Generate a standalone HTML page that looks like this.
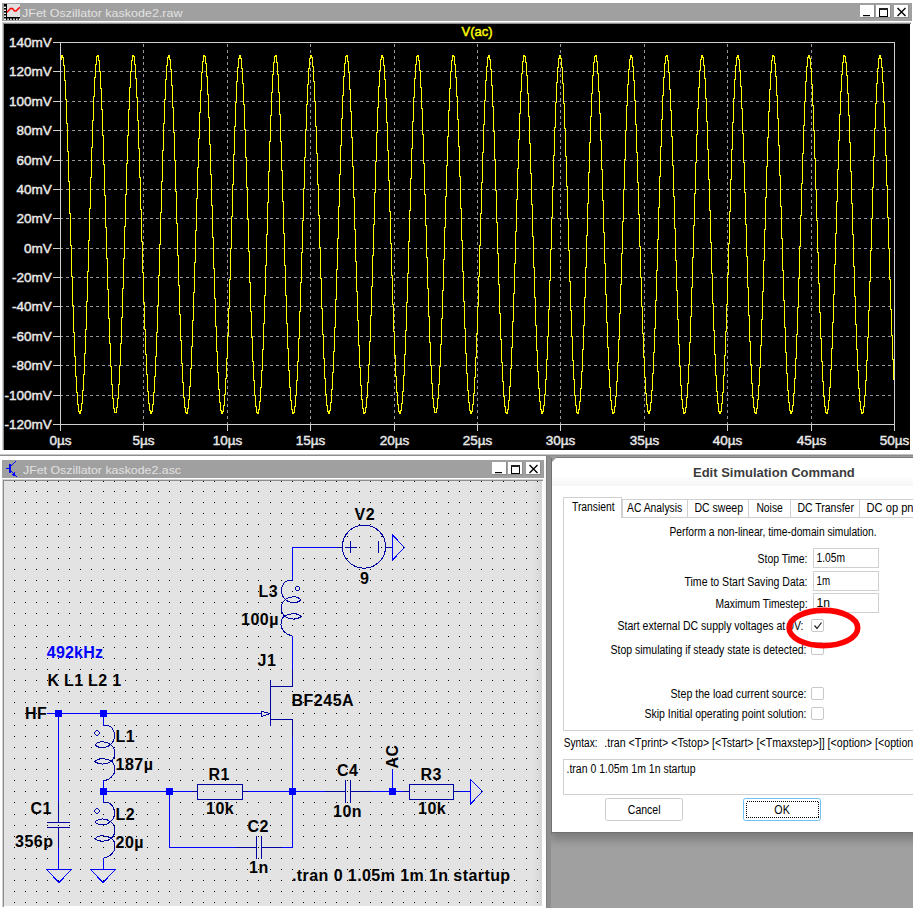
<!DOCTYPE html>
<html><head><meta charset="utf-8"><title>LTspice</title>
<style>
html,body{margin:0;padding:0;background:#fff;width:913px;height:908px;overflow:hidden}
svg{display:block;position:absolute;left:0;top:0}
text{font-family:"Liberation Sans", sans-serif}
</style></head><body>
<svg width="913" height="908" viewBox="0 0 913 908">

<rect x="2" y="3" width="910" height="18" fill="#a0a0a0" />
<rect x="7" y="4" width="13" height="13" fill="#e0e0e0" />
<rect x="4" y="4" width="3" height="16" fill="#000" />
<rect x="4" y="17" width="16" height="3" fill="#000" />
<rect x="4" y="6.6" width="2" height="1.4" fill="#fff" />
<rect x="4" y="9.6" width="2" height="1.4" fill="#fff" />
<rect x="4" y="12.6" width="2" height="1.4" fill="#fff" />
<rect x="4" y="15.5" width="2" height="1.4" fill="#fff" />
<rect x="4" y="18.5" width="2" height="1.4" fill="#fff" />
<rect x="7.3" y="18.5" width="1.5" height="1.5" fill="#fff" />
<rect x="10.2" y="18.5" width="1.5" height="1.5" fill="#fff" />
<rect x="13.2" y="18.5" width="1.5" height="1.5" fill="#fff" />
<rect x="16.1" y="18.5" width="1.5" height="1.5" fill="#fff" />
<rect x="18.8" y="18.5" width="1.5" height="1.5" fill="#fff" />
<polyline points="7,12.3 10.5,8.5 12.5,8.5 14.5,11 16,11 19.8,7.2" fill="none" stroke="#f00" stroke-width="1.5"/>
<text x="22" y="17.3" font-size="11.5" font-weight="normal" fill="#e2e2e2" text-anchor="start" textLength="160.5" lengthAdjust="spacingAndGlyphs" >JFet Oszillator kaskode2.raw</text>
<rect x="860" y="5" width="15" height="13" fill="#ffffff" />
<rect x="860" y="17" width="15" height="1" fill="#8c8c8c" />
<rect x="874" y="5" width="1" height="13" fill="#8c8c8c" />
<rect x="876" y="5" width="15" height="13" fill="#ffffff" />
<rect x="876" y="17" width="15" height="1" fill="#8c8c8c" />
<rect x="890" y="5" width="1" height="13" fill="#8c8c8c" />
<rect x="894" y="5" width="15" height="13" fill="#ffffff" />
<rect x="894" y="17" width="15" height="1" fill="#8c8c8c" />
<rect x="908" y="5" width="1" height="13" fill="#8c8c8c" />
<rect x="863" y="15" width="7" height="1.2" fill="#000" />
<rect x="879.5" y="8.5" width="8" height="8" fill="none" stroke="#000" stroke-width="1" shape-rendering="crispEdges"/>
<rect x="879" y="8" width="9" height="2" fill="#222" />
<path d="M897.5 8L905.5 16M905.5 8L897.5 16" stroke="#000" stroke-width="1.4"/>
<rect x="2" y="22" width="909" height="1" fill="#d2d2d2" />
<rect x="2" y="22" width="1" height="428" fill="#d2d2d2" />
<rect x="3" y="23" width="908" height="1" fill="#8c8c8c" />
<rect x="3" y="23" width="1" height="427" fill="#8c8c8c" />
<rect x="4" y="24" width="906" height="426" fill="#000" />
<path d="M60 71.5H894M60 101.5H894M60 130.5H894M60 160.5H894M60 189.5H894M60 218.5H894M60 248.5H894M60 277.5H894M60 306.5H894M60 336.5H894M60 365.5H894M60 395.5H894M143.5 44V424M227.5 44V424M310.5 44V424M394.5 44V424M477.5 44V424M560.5 44V424M644.5 44V424M727.5 44V424M811.5 44V424" stroke="#969696" stroke-width="1" stroke-dasharray="3 3" fill="none"/>
<rect x="60.5" y="42.5" width="834" height="382" fill="none" stroke="#d0d0d0" stroke-width="1"/>
<path d="M53 42.5H60M53 71.5H60M53 101.5H60M53 130.5H60M53 160.5H60M53 189.5H60M53 218.5H60M53 248.5H60M53 277.5H60M53 306.5H60M53 336.5H60M53 365.5H60M53 395.5H60M53 424.5H60M60.5 424V431M143.5 424V431M227.5 424V431M310.5 424V431M394.5 424V431M477.5 424V431M560.5 424V431M644.5 424V431M727.5 424V431M811.5 424V431M894.5 424V431" stroke="#d0d0d0" stroke-width="1" fill="none"/>
<text x="51.8" y="47" font-size="13.5" font-weight="normal" fill="#e8e8e8" text-anchor="end" stroke="#e8e8e8" stroke-width="0.45">140mV</text>
<text x="51.8" y="76" font-size="13.5" font-weight="normal" fill="#e8e8e8" text-anchor="end" stroke="#e8e8e8" stroke-width="0.45">120mV</text>
<text x="51.8" y="106" font-size="13.5" font-weight="normal" fill="#e8e8e8" text-anchor="end" stroke="#e8e8e8" stroke-width="0.45">100mV</text>
<text x="51.8" y="135" font-size="13.5" font-weight="normal" fill="#e8e8e8" text-anchor="end" stroke="#e8e8e8" stroke-width="0.45">80mV</text>
<text x="51.8" y="165" font-size="13.5" font-weight="normal" fill="#e8e8e8" text-anchor="end" stroke="#e8e8e8" stroke-width="0.45">60mV</text>
<text x="51.8" y="194" font-size="13.5" font-weight="normal" fill="#e8e8e8" text-anchor="end" stroke="#e8e8e8" stroke-width="0.45">40mV</text>
<text x="51.8" y="223" font-size="13.5" font-weight="normal" fill="#e8e8e8" text-anchor="end" stroke="#e8e8e8" stroke-width="0.45">20mV</text>
<text x="51.8" y="253" font-size="13.5" font-weight="normal" fill="#e8e8e8" text-anchor="end" stroke="#e8e8e8" stroke-width="0.45">0mV</text>
<text x="51.8" y="282" font-size="13.5" font-weight="normal" fill="#e8e8e8" text-anchor="end" stroke="#e8e8e8" stroke-width="0.45">-20mV</text>
<text x="51.8" y="311" font-size="13.5" font-weight="normal" fill="#e8e8e8" text-anchor="end" stroke="#e8e8e8" stroke-width="0.45">-40mV</text>
<text x="51.8" y="341" font-size="13.5" font-weight="normal" fill="#e8e8e8" text-anchor="end" stroke="#e8e8e8" stroke-width="0.45">-60mV</text>
<text x="51.8" y="370" font-size="13.5" font-weight="normal" fill="#e8e8e8" text-anchor="end" stroke="#e8e8e8" stroke-width="0.45">-80mV</text>
<text x="51.8" y="400" font-size="13.5" font-weight="normal" fill="#e8e8e8" text-anchor="end" stroke="#e8e8e8" stroke-width="0.45">-100mV</text>
<text x="51.8" y="429" font-size="13.5" font-weight="normal" fill="#e8e8e8" text-anchor="end" stroke="#e8e8e8" stroke-width="0.45">-120mV</text>
<text x="60.5" y="445" font-size="13.5" font-weight="normal" fill="#e8e8e8" text-anchor="middle" stroke="#e8e8e8" stroke-width="0.45">0µs</text>
<text x="143.5" y="445" font-size="13.5" font-weight="normal" fill="#e8e8e8" text-anchor="middle" stroke="#e8e8e8" stroke-width="0.45">5µs</text>
<text x="227.5" y="445" font-size="13.5" font-weight="normal" fill="#e8e8e8" text-anchor="middle" stroke="#e8e8e8" stroke-width="0.45">10µs</text>
<text x="310.5" y="445" font-size="13.5" font-weight="normal" fill="#e8e8e8" text-anchor="middle" stroke="#e8e8e8" stroke-width="0.45">15µs</text>
<text x="394.5" y="445" font-size="13.5" font-weight="normal" fill="#e8e8e8" text-anchor="middle" stroke="#e8e8e8" stroke-width="0.45">20µs</text>
<text x="477.5" y="445" font-size="13.5" font-weight="normal" fill="#e8e8e8" text-anchor="middle" stroke="#e8e8e8" stroke-width="0.45">25µs</text>
<text x="560.5" y="445" font-size="13.5" font-weight="normal" fill="#e8e8e8" text-anchor="middle" stroke="#e8e8e8" stroke-width="0.45">30µs</text>
<text x="644.5" y="445" font-size="13.5" font-weight="normal" fill="#e8e8e8" text-anchor="middle" stroke="#e8e8e8" stroke-width="0.45">35µs</text>
<text x="727.5" y="445" font-size="13.5" font-weight="normal" fill="#e8e8e8" text-anchor="middle" stroke="#e8e8e8" stroke-width="0.45">40µs</text>
<text x="811.5" y="445" font-size="13.5" font-weight="normal" fill="#e8e8e8" text-anchor="middle" stroke="#e8e8e8" stroke-width="0.45">45µs</text>
<text x="894.5" y="445" font-size="13.5" font-weight="normal" fill="#e8e8e8" text-anchor="middle" stroke="#e8e8e8" stroke-width="0.45">50µs</text>
<text x="477" y="36.2" font-size="13.5" font-weight="normal" fill="#ffff00" text-anchor="middle" textLength="31" lengthAdjust="spacingAndGlyphs" stroke="#ffff00" stroke-width="0.45">V(ac)</text>
<path d="M61 55h1v5h-1zM62 55h1v3h-1zM63 57h1v9h-1zM64 65h1v16h-1zM65 80h1v20h-1zM66 99h1v25h-1zM67 123h1v29h-1zM68 151h1v31h-1zM69 181h1v33h-1zM70 213h1v33h-1zM71 245h1v32h-1zM72 276h1v30h-1zM73 305h1v28h-1zM74 332h1v25h-1zM75 356h1v21h-1zM76 376h1v17h-1zM77 392h1v13h-1zM78 404h1v8h-1zM79 411h1v3h-1zM80 410h1v4h-1zM81 403h1v8h-1zM82 390h1v14h-1zM83 374h1v17h-1zM84 353h1v22h-1zM85 329h1v25h-1zM86 301h1v29h-1zM87 271h1v31h-1zM88 240h1v32h-1zM89 208h1v33h-1zM90 177h1v32h-1zM91 147h1v31h-1zM92 120h1v28h-1zM93 96h1v25h-1zM94 77h1v20h-1zM95 64h1v14h-1zM96 56h1v9h-1zM97 55h1v2h-1zM98 55h1v6h-1zM99 60h1v12h-1zM100 71h1v18h-1zM101 88h1v22h-1zM102 109h1v27h-1zM103 135h1v30h-1zM104 164h1v32h-1zM105 195h1v33h-1zM106 227h1v32h-1zM107 258h1v32h-1zM108 289h1v30h-1zM109 318h1v26h-1zM110 343h1v24h-1zM111 366h1v19h-1zM112 384h1v15h-1zM113 398h1v11h-1zM114 408h1v5h-1zM115 412h1v1h-1zM116 407h1v6h-1zM117 398h1v10h-1zM118 384h1v15h-1zM119 365h1v20h-1zM120 343h1v23h-1zM121 317h1v27h-1zM122 288h1v30h-1zM123 258h1v31h-1zM124 226h1v33h-1zM125 194h1v33h-1zM126 163h1v32h-1zM127 135h1v29h-1zM128 109h1v27h-1zM129 87h1v23h-1zM130 71h1v17h-1zM131 60h1v12h-1zM132 55h1v6h-1zM133 55h1v2h-1zM134 56h1v9h-1zM135 64h1v15h-1zM136 78h1v20h-1zM137 97h1v24h-1zM138 120h1v29h-1zM139 148h1v30h-1zM140 177h1v33h-1zM141 209h1v33h-1zM142 241h1v32h-1zM143 272h1v31h-1zM144 302h1v28h-1zM145 329h1v26h-1zM146 354h1v21h-1zM147 374h1v18h-1zM148 391h1v13h-1zM149 403h1v8h-1zM150 410h1v4h-1zM151 411h1v3h-1zM152 404h1v8h-1zM153 392h1v13h-1zM154 376h1v17h-1zM155 356h1v21h-1zM156 332h1v25h-1zM157 305h1v28h-1zM158 275h1v31h-1zM159 244h1v32h-1zM160 212h1v33h-1zM161 181h1v32h-1zM162 150h1v32h-1zM163 123h1v28h-1zM164 99h1v25h-1zM165 79h1v21h-1zM166 65h1v15h-1zM167 57h1v9h-1zM168 55h1v3h-1zM169 55h1v5h-1zM170 59h1v11h-1zM171 69h1v17h-1zM172 85h1v23h-1zM173 107h1v26h-1zM174 132h1v29h-1zM175 160h1v32h-1zM176 191h1v33h-1zM177 223h1v33h-1zM178 255h1v31h-1zM179 285h1v30h-1zM180 314h1v27h-1zM181 340h1v24h-1zM182 363h1v20h-1zM183 382h1v16h-1zM184 397h1v11h-1zM185 407h1v6h-1zM186 412h1v2h-1zM187 408h1v6h-1zM188 399h1v10h-1zM189 386h1v14h-1zM190 368h1v19h-1zM191 346h1v23h-1zM192 320h1v27h-1zM193 292h1v29h-1zM194 262h1v31h-1zM195 230h1v33h-1zM196 198h1v33h-1zM197 167h1v32h-1zM198 138h1v30h-1zM199 112h1v27h-1zM200 90h1v23h-1zM201 72h1v19h-1zM202 61h1v12h-1zM203 55h1v7h-1zM204 55h1v2h-1zM205 56h1v8h-1zM206 63h1v14h-1zM207 76h1v19h-1zM208 94h1v24h-1zM209 117h1v28h-1zM210 144h1v31h-1zM211 174h1v32h-1zM212 205h1v33h-1zM213 237h1v32h-1zM214 268h1v31h-1zM215 298h1v29h-1zM216 326h1v26h-1zM217 351h1v22h-1zM218 372h1v18h-1zM219 389h1v14h-1zM220 402h1v9h-1zM221 410h1v4h-1zM222 411h1v3h-1zM223 405h1v7h-1zM224 394h1v12h-1zM225 378h1v17h-1zM226 358h1v21h-1zM227 335h1v24h-1zM228 308h1v28h-1zM229 279h1v30h-1zM230 248h1v32h-1zM231 216h1v33h-1zM232 184h1v33h-1zM233 154h1v31h-1zM234 126h1v29h-1zM235 102h1v25h-1zM236 81h1v22h-1zM237 67h1v15h-1zM238 58h1v10h-1zM239 55h1v4h-1zM240 55h1v4h-1zM241 58h1v11h-1zM242 68h1v16h-1zM243 83h1v22h-1zM244 104h1v26h-1zM245 129h1v29h-1zM246 157h1v31h-1zM247 187h1v33h-1zM248 219h1v33h-1zM249 251h1v32h-1zM250 282h1v30h-1zM251 311h1v27h-1zM252 337h1v25h-1zM253 361h1v20h-1zM254 380h1v16h-1zM255 395h1v12h-1zM256 406h1v7h-1zM257 412h1v2h-1zM258 409h1v5h-1zM259 401h1v9h-1zM260 387h1v15h-1zM261 370h1v18h-1zM262 349h1v22h-1zM263 323h1v27h-1zM264 295h1v29h-1zM265 265h1v31h-1zM266 234h1v32h-1zM267 202h1v33h-1zM268 171h1v32h-1zM269 141h1v31h-1zM270 115h1v27h-1zM271 92h1v24h-1zM272 74h1v19h-1zM273 62h1v13h-1zM274 56h1v7h-1zM275 55h1v2h-1zM276 55h1v8h-1zM277 62h1v13h-1zM278 74h1v19h-1zM279 92h1v23h-1zM280 114h1v28h-1zM281 141h1v30h-1zM282 170h1v32h-1zM283 201h1v33h-1zM284 233h1v33h-1zM285 265h1v31h-1zM286 295h1v29h-1zM287 323h1v26h-1zM288 348h1v23h-1zM289 370h1v18h-1zM290 387h1v14h-1zM291 400h1v10h-1zM292 409h1v5h-1zM293 412h1v2h-1zM294 406h1v7h-1zM295 395h1v12h-1zM296 380h1v16h-1zM297 361h1v20h-1zM298 338h1v24h-1zM299 311h1v28h-1zM300 282h1v30h-1zM301 252h1v31h-1zM302 220h1v33h-1zM303 188h1v33h-1zM304 157h1v32h-1zM305 129h1v29h-1zM306 104h1v26h-1zM307 84h1v21h-1zM308 68h1v17h-1zM309 58h1v11h-1zM310 55h1v4h-1zM311 55h1v3h-1zM312 57h1v10h-1zM313 66h1v16h-1zM314 81h1v21h-1zM315 101h1v26h-1zM316 126h1v28h-1zM317 153h1v32h-1zM318 184h1v32h-1zM319 215h1v33h-1zM320 247h1v32h-1zM321 278h1v31h-1zM322 308h1v27h-1zM323 334h1v25h-1zM324 358h1v21h-1zM325 378h1v17h-1zM326 394h1v12h-1zM327 405h1v7h-1zM328 411h1v3h-1zM329 410h1v4h-1zM330 402h1v9h-1zM331 389h1v14h-1zM332 372h1v18h-1zM333 351h1v22h-1zM334 327h1v25h-1zM335 299h1v29h-1zM336 269h1v31h-1zM337 238h1v32h-1zM338 206h1v33h-1zM339 174h1v33h-1zM340 145h1v30h-1zM341 118h1v28h-1zM342 95h1v24h-1zM343 76h1v20h-1zM344 63h1v14h-1zM345 56h1v8h-1zM346 55h1v2h-1zM347 55h1v7h-1zM348 61h1v12h-1zM349 72h1v18h-1zM350 89h1v23h-1zM351 111h1v27h-1zM352 137h1v30h-1zM353 166h1v32h-1zM354 197h1v33h-1zM355 229h1v33h-1zM356 261h1v31h-1zM357 291h1v30h-1zM358 320h1v26h-1zM359 345h1v23h-1zM360 367h1v19h-1zM361 385h1v15h-1zM362 399h1v10h-1zM363 408h1v6h-1zM364 412h1v2h-1zM365 407h1v6h-1zM366 397h1v11h-1zM367 382h1v16h-1zM368 364h1v19h-1zM369 341h1v24h-1zM370 315h1v27h-1zM371 286h1v30h-1zM372 255h1v32h-1zM373 224h1v32h-1zM374 192h1v33h-1zM375 161h1v32h-1zM376 132h1v30h-1zM377 107h1v26h-1zM378 86h1v22h-1zM379 70h1v17h-1zM380 59h1v12h-1zM381 55h1v5h-1zM382 55h1v3h-1zM383 57h1v9h-1zM384 65h1v15h-1zM385 79h1v20h-1zM386 98h1v25h-1zM387 122h1v29h-1zM388 150h1v31h-1zM389 180h1v32h-1zM390 211h1v33h-1zM391 243h1v33h-1zM392 275h1v30h-1zM393 304h1v28h-1zM394 331h1v25h-1zM395 355h1v22h-1zM396 376h1v17h-1zM397 392h1v13h-1zM398 404h1v8h-1zM399 411h1v3h-1zM400 410h1v4h-1zM401 403h1v8h-1zM402 391h1v13h-1zM403 375h1v17h-1zM404 354h1v22h-1zM405 330h1v25h-1zM406 302h1v29h-1zM407 273h1v30h-1zM408 241h1v33h-1zM409 210h1v32h-1zM410 178h1v33h-1zM411 148h1v31h-1zM412 121h1v28h-1zM413 97h1v25h-1zM414 78h1v20h-1zM415 64h1v15h-1zM416 56h1v9h-1zM417 55h1v2h-1zM418 55h1v6h-1zM419 60h1v11h-1zM420 70h1v18h-1zM421 87h1v22h-1zM422 108h1v27h-1zM423 134h1v30h-1zM424 163h1v32h-1zM425 194h1v32h-1zM426 225h1v33h-1zM427 257h1v32h-1zM428 288h1v29h-1zM429 316h1v27h-1zM430 342h1v24h-1zM431 365h1v19h-1zM432 383h1v16h-1zM433 398h1v10h-1zM434 407h1v6h-1zM435 412h1v1h-1zM436 408h1v5h-1zM437 398h1v11h-1zM438 384h1v15h-1zM439 366h1v19h-1zM440 344h1v23h-1zM441 318h1v27h-1zM442 290h1v29h-1zM443 259h1v32h-1zM444 227h1v33h-1zM445 196h1v32h-1zM446 165h1v32h-1zM447 136h1v30h-1zM448 110h1v27h-1zM449 88h1v23h-1zM450 71h1v18h-1zM451 60h1v12h-1zM452 55h1v6h-1zM453 55h1v2h-1zM454 56h1v9h-1zM455 64h1v14h-1zM456 77h1v20h-1zM457 96h1v24h-1zM458 119h1v28h-1zM459 146h1v31h-1zM460 176h1v33h-1zM461 208h1v33h-1zM462 240h1v32h-1zM463 271h1v31h-1zM464 301h1v28h-1zM465 328h1v26h-1zM466 353h1v21h-1zM467 373h1v18h-1zM468 390h1v13h-1zM469 402h1v9h-1zM470 410h1v4h-1zM471 411h1v3h-1zM472 404h1v8h-1zM473 393h1v12h-1zM474 377h1v17h-1zM475 357h1v21h-1zM476 333h1v25h-1zM477 306h1v28h-1zM478 276h1v31h-1zM479 245h1v32h-1zM480 213h1v33h-1zM481 182h1v32h-1zM482 152h1v31h-1zM483 124h1v29h-1zM484 100h1v25h-1zM485 80h1v21h-1zM486 66h1v15h-1zM487 57h1v10h-1zM488 55h1v3h-1zM489 55h1v5h-1zM490 59h1v11h-1zM491 69h1v17h-1zM492 85h1v22h-1zM493 106h1v26h-1zM494 131h1v29h-1zM495 159h1v32h-1zM496 190h1v33h-1zM497 222h1v32h-1zM498 253h1v32h-1zM499 284h1v30h-1zM500 313h1v27h-1zM501 339h1v24h-1zM502 362h1v20h-1zM503 381h1v16h-1zM504 396h1v11h-1zM505 406h1v7h-1zM506 412h1v2h-1zM507 409h1v5h-1zM508 400h1v10h-1zM509 386h1v15h-1zM510 368h1v19h-1zM511 347h1v22h-1zM512 321h1v27h-1zM513 293h1v29h-1zM514 263h1v31h-1zM515 231h1v33h-1zM516 199h1v33h-1zM517 168h1v32h-1zM518 139h1v30h-1zM519 113h1v27h-1zM520 91h1v23h-1zM521 73h1v19h-1zM522 61h1v13h-1zM523 55h1v7h-1zM524 55h1v2h-1zM525 56h1v7h-1zM526 62h1v14h-1zM527 75h1v19h-1zM528 93h1v24h-1zM529 116h1v28h-1zM530 143h1v31h-1zM531 173h1v32h-1zM532 204h1v33h-1zM533 236h1v32h-1zM534 267h1v31h-1zM535 297h1v29h-1zM536 325h1v26h-1zM537 350h1v22h-1zM538 371h1v18h-1zM539 388h1v14h-1zM540 401h1v9h-1zM541 409h1v5h-1zM542 411h1v3h-1zM543 405h1v7h-1zM544 394h1v12h-1zM545 379h1v16h-1zM546 359h1v21h-1zM547 336h1v24h-1zM548 309h1v28h-1zM549 280h1v30h-1zM550 249h1v32h-1zM551 217h1v33h-1zM552 186h1v32h-1zM553 155h1v32h-1zM554 127h1v29h-1zM555 102h1v26h-1zM556 82h1v21h-1zM557 67h1v16h-1zM558 58h1v10h-1zM559 55h1v4h-1zM560 55h1v4h-1zM561 58h1v10h-1zM562 67h1v17h-1zM563 83h1v21h-1zM564 103h1v26h-1zM565 128h1v29h-1zM566 156h1v31h-1zM567 186h1v33h-1zM568 218h1v33h-1zM569 250h1v32h-1zM570 281h1v30h-1zM571 310h1v27h-1zM572 336h1v25h-1zM573 360h1v20h-1zM574 379h1v17h-1zM575 395h1v11h-1zM576 405h1v8h-1zM577 412h1v2h-1zM578 409h1v5h-1zM579 401h1v9h-1zM580 388h1v14h-1zM581 371h1v18h-1zM582 349h1v23h-1zM583 325h1v25h-1zM584 297h1v29h-1zM585 267h1v31h-1zM586 235h1v33h-1zM587 203h1v33h-1zM588 172h1v32h-1zM589 142h1v31h-1zM590 116h1v27h-1zM591 93h1v24h-1zM592 75h1v19h-1zM593 62h1v14h-1zM594 56h1v7h-1zM595 55h1v2h-1zM596 55h1v7h-1zM597 61h1v13h-1zM598 73h1v19h-1zM599 91h1v23h-1zM600 113h1v28h-1zM601 140h1v30h-1zM602 169h1v32h-1zM603 200h1v33h-1zM604 232h1v32h-1zM605 263h1v32h-1zM606 294h1v29h-1zM607 322h1v26h-1zM608 347h1v23h-1zM609 369h1v19h-1zM610 387h1v14h-1zM611 400h1v10h-1zM612 409h1v5h-1zM613 412h1v2h-1zM614 406h1v7h-1zM615 396h1v11h-1zM616 381h1v16h-1zM617 362h1v20h-1zM618 339h1v24h-1zM619 313h1v27h-1zM620 284h1v30h-1zM621 253h1v32h-1zM622 221h1v33h-1zM623 189h1v33h-1zM624 159h1v31h-1zM625 130h1v30h-1zM626 105h1v26h-1zM627 84h1v22h-1zM628 69h1v16h-1zM629 59h1v11h-1zM630 55h1v5h-1zM631 55h1v3h-1zM632 57h1v10h-1zM633 66h1v15h-1zM634 80h1v21h-1zM635 100h1v25h-1zM636 124h1v29h-1zM637 152h1v31h-1zM638 182h1v33h-1zM639 214h1v33h-1zM640 246h1v32h-1zM641 277h1v30h-1zM642 306h1v28h-1zM643 333h1v25h-1zM644 357h1v21h-1zM645 377h1v17h-1zM646 393h1v12h-1zM647 404h1v8h-1zM648 411h1v3h-1zM649 410h1v4h-1zM650 402h1v9h-1zM651 390h1v13h-1zM652 373h1v18h-1zM653 352h1v22h-1zM654 328h1v25h-1zM655 300h1v29h-1zM656 270h1v31h-1zM657 239h1v32h-1zM658 207h1v33h-1zM659 176h1v32h-1zM660 146h1v31h-1zM661 119h1v28h-1zM662 95h1v25h-1zM663 77h1v19h-1zM664 63h1v15h-1zM665 56h1v8h-1zM666 55h1v2h-1zM667 55h1v6h-1zM668 60h1v13h-1zM669 72h1v18h-1zM670 89h1v22h-1zM671 110h1v27h-1zM672 136h1v30h-1zM673 165h1v32h-1zM674 196h1v33h-1zM675 228h1v33h-1zM676 260h1v31h-1zM677 290h1v30h-1zM678 319h1v26h-1zM679 344h1v23h-1zM680 366h1v20h-1zM681 385h1v15h-1zM682 399h1v10h-1zM683 408h1v6h-1zM684 412h1v2h-1zM685 407h1v6h-1zM686 397h1v11h-1zM687 383h1v15h-1zM688 364h1v20h-1zM689 342h1v23h-1zM690 316h1v27h-1zM691 287h1v30h-1zM692 257h1v31h-1zM693 225h1v33h-1zM694 193h1v33h-1zM695 162h1v32h-1zM696 134h1v29h-1zM697 108h1v27h-1zM698 87h1v22h-1zM699 70h1v18h-1zM700 59h1v12h-1zM701 55h1v5h-1zM702 55h1v3h-1zM703 57h1v9h-1zM704 65h1v14h-1zM705 78h1v21h-1zM706 98h1v24h-1zM707 121h1v29h-1zM708 149h1v31h-1zM709 179h1v32h-1zM710 210h1v33h-1zM711 242h1v32h-1zM712 273h1v31h-1zM713 303h1v28h-1zM714 330h1v25h-1zM715 354h1v22h-1zM716 375h1v17h-1zM717 391h1v13h-1zM718 403h1v9h-1zM719 411h1v3h-1zM720 411h1v3h-1zM721 403h1v9h-1zM722 392h1v12h-1zM723 375h1v18h-1zM724 355h1v21h-1zM725 331h1v25h-1zM726 304h1v28h-1zM727 274h1v31h-1zM728 243h1v32h-1zM729 211h1v33h-1zM730 179h1v33h-1zM731 149h1v31h-1zM732 122h1v28h-1zM733 98h1v25h-1zM734 79h1v20h-1zM735 65h1v15h-1zM736 57h1v9h-1zM737 55h1v3h-1zM738 55h1v5h-1zM739 59h1v12h-1zM740 70h1v17h-1zM741 86h1v23h-1zM742 108h1v26h-1zM743 133h1v30h-1zM744 162h1v31h-1zM745 192h1v33h-1zM746 224h1v33h-1zM747 256h1v32h-1zM748 287h1v29h-1zM749 315h1v27h-1zM750 341h1v24h-1zM751 364h1v20h-1zM752 383h1v15h-1zM753 397h1v11h-1zM754 407h1v6h-1zM755 412h1v2h-1zM756 408h1v6h-1zM757 399h1v10h-1zM758 385h1v15h-1zM759 367h1v19h-1zM760 345h1v23h-1zM761 319h1v27h-1zM762 291h1v29h-1zM763 260h1v32h-1zM764 229h1v32h-1zM765 197h1v33h-1zM766 166h1v32h-1zM767 137h1v30h-1zM768 111h1v27h-1zM769 89h1v23h-1zM770 72h1v18h-1zM771 60h1v13h-1zM772 55h1v6h-1zM773 55h1v2h-1zM774 56h1v8h-1zM775 63h1v14h-1zM776 76h1v20h-1zM777 95h1v24h-1zM778 118h1v28h-1zM779 145h1v31h-1zM780 175h1v32h-1zM781 206h1v33h-1zM782 238h1v33h-1zM783 270h1v31h-1zM784 300h1v28h-1zM785 327h1v26h-1zM786 352h1v22h-1zM787 373h1v18h-1zM788 390h1v13h-1zM789 402h1v9h-1zM790 410h1v4h-1zM791 411h1v3h-1zM792 405h1v7h-1zM793 393h1v13h-1zM794 378h1v16h-1zM795 358h1v21h-1zM796 334h1v25h-1zM797 307h1v28h-1zM798 278h1v30h-1zM799 246h1v33h-1zM800 215h1v32h-1zM801 183h1v33h-1zM802 153h1v31h-1zM803 125h1v29h-1zM804 101h1v25h-1zM805 81h1v21h-1zM806 66h1v16h-1zM807 57h1v10h-1zM808 55h1v3h-1zM809 55h1v4h-1zM810 58h1v11h-1zM811 68h1v17h-1zM812 84h1v22h-1zM813 105h1v26h-1zM814 130h1v29h-1zM815 158h1v32h-1zM816 189h1v32h-1zM817 220h1v33h-1zM818 252h1v32h-1zM819 283h1v30h-1zM820 312h1v27h-1zM821 338h1v24h-1zM822 361h1v21h-1zM823 381h1v16h-1zM824 396h1v11h-1zM825 406h1v7h-1zM826 412h1v2h-1zM827 409h1v5h-1zM828 400h1v10h-1zM829 387h1v14h-1zM830 369h1v19h-1zM831 348h1v22h-1zM832 322h1v27h-1zM833 294h1v29h-1zM834 264h1v31h-1zM835 233h1v32h-1zM836 201h1v33h-1zM837 169h1v33h-1zM838 140h1v30h-1zM839 114h1v27h-1zM840 91h1v24h-1zM841 74h1v18h-1zM842 62h1v13h-1zM843 55h1v8h-1zM844 55h1v2h-1zM845 56h1v7h-1zM846 62h1v14h-1zM847 75h1v19h-1zM848 93h1v23h-1zM849 115h1v28h-1zM850 142h1v30h-1zM851 171h1v33h-1zM852 203h1v32h-1zM853 234h1v33h-1zM854 266h1v31h-1zM855 296h1v29h-1zM856 324h1v26h-1zM857 349h1v22h-1zM858 370h1v19h-1zM859 388h1v14h-1zM860 401h1v9h-1zM861 409h1v5h-1zM862 412h1v2h-1zM863 406h1v7h-1zM864 395h1v12h-1zM865 380h1v16h-1zM866 360h1v21h-1zM867 337h1v24h-1zM868 310h1v28h-1zM869 281h1v30h-1zM870 250h1v32h-1zM871 218h1v33h-1zM872 187h1v32h-1zM873 156h1v32h-1zM874 128h1v29h-1zM875 103h1v26h-1zM876 83h1v21h-1zM877 68h1v16h-1zM878 58h1v11h-1zM879 55h1v4h-1zM880 55h1v4h-1zM881 58h1v10h-1zM882 67h1v16h-1zM883 82h1v21h-1zM884 102h1v26h-1zM885 127h1v29h-1zM886 155h1v31h-1zM887 185h1v33h-1zM888 217h1v32h-1zM889 248h1v32h-1zM890 279h1v31h-1zM891 309h1v27h-1zM892 335h1v25h-1zM893 359h1v21h-1z" fill="#ffff00"/>
<rect x="0" y="454" width="913" height="1" fill="#c6c6c6" />
<rect x="0" y="455" width="913" height="1" fill="#8e8e8e" />
<rect x="2" y="460" width="542" height="18" fill="#a0a0a0" />
<text x="23" y="474.3" font-size="11.5" font-weight="normal" fill="#e2e2e2" text-anchor="start" textLength="158" lengthAdjust="spacingAndGlyphs" >JFet Oszillator kaskode2.asc</text>
<rect x="492" y="462" width="15" height="13" fill="#ffffff" />
<rect x="492" y="474" width="15" height="1" fill="#8c8c8c" />
<rect x="506" y="462" width="1" height="13" fill="#8c8c8c" />
<rect x="508" y="462" width="15" height="13" fill="#ffffff" />
<rect x="508" y="474" width="15" height="1" fill="#8c8c8c" />
<rect x="522" y="462" width="1" height="13" fill="#8c8c8c" />
<rect x="526" y="462" width="15" height="13" fill="#ffffff" />
<rect x="526" y="474" width="15" height="1" fill="#8c8c8c" />
<rect x="540" y="462" width="1" height="13" fill="#8c8c8c" />
<rect x="495" y="472" width="7" height="1.2" fill="#000" />
<rect x="511.5" y="465.5" width="8" height="8" fill="none" stroke="#000" stroke-width="1" shape-rendering="crispEdges"/>
<rect x="511" y="465" width="9" height="2" fill="#222" />
<path d="M529.5 465L537.5 473M537.5 465L529.5 473" stroke="#000" stroke-width="1.4"/>
<rect x="2" y="479" width="541" height="1" fill="#d2d2d2" />
<rect x="2" y="479" width="1" height="428" fill="#d2d2d2" />
<rect x="3" y="480" width="540" height="1" fill="#8c8c8c" />
<rect x="3" y="480" width="1" height="427" fill="#8c8c8c" />
<rect x="4" y="481" width="538" height="425" fill="#e3e3e3" />
<defs><linearGradient id="rsh" x1="0" y1="0" x2="1" y2="0"><stop offset="0" stop-color="#e3e3e3"/><stop offset="1" stop-color="#d6d6d6"/></linearGradient></defs>
<rect x="532" y="481" width="10" height="425" fill="url(#rsh)" />
<path d="M9 464h2v9h-2zM6 468h3v1h-3zM11 465h1v1h-1zM12 464h1v1h-1zM13 463h1v1h-1zM14 462h1v1h-1zM15 461h1v1h-1zM11 471h1v1h-1zM12 472h1v1h-1zM13 473h1v1h-1zM14 474h1v1h-1zM15 475h1v1h-1zM16 476h1v1h-1zM12 474h3v1h-3zM13 473h2v3h-2zM14 472h1v1h-1z" fill="#0000ff"/>
<path d="M14 481h1v1h-1zM25 481h1v1h-1zM36 481h1v1h-1zM47 481h1v1h-1zM58 481h1v1h-1zM69 481h1v1h-1zM80 481h1v1h-1zM91 481h1v1h-1zM103 481h1v1h-1zM114 481h1v1h-1zM125 481h1v1h-1zM136 481h1v1h-1zM147 481h1v1h-1zM158 481h1v1h-1zM169 481h1v1h-1zM180 481h1v1h-1zM192 481h1v1h-1zM203 481h1v1h-1zM214 481h1v1h-1zM225 481h1v1h-1zM236 481h1v1h-1zM247 481h1v1h-1zM258 481h1v1h-1zM270 481h1v1h-1zM281 481h1v1h-1zM292 481h1v1h-1zM303 481h1v1h-1zM314 481h1v1h-1zM325 481h1v1h-1zM336 481h1v1h-1zM347 481h1v1h-1zM359 481h1v1h-1zM370 481h1v1h-1zM381 481h1v1h-1zM392 481h1v1h-1zM403 481h1v1h-1zM414 481h1v1h-1zM425 481h1v1h-1zM436 481h1v1h-1zM448 481h1v1h-1zM459 481h1v1h-1zM470 481h1v1h-1zM481 481h1v1h-1zM492 481h1v1h-1zM503 481h1v1h-1zM514 481h1v1h-1zM526 481h1v1h-1zM537 481h1v1h-1zM14 491h1v1h-1zM25 491h1v1h-1zM36 491h1v1h-1zM47 491h1v1h-1zM58 491h1v1h-1zM69 491h1v1h-1zM80 491h1v1h-1zM91 491h1v1h-1zM103 491h1v1h-1zM114 491h1v1h-1zM125 491h1v1h-1zM136 491h1v1h-1zM147 491h1v1h-1zM158 491h1v1h-1zM169 491h1v1h-1zM180 491h1v1h-1zM192 491h1v1h-1zM203 491h1v1h-1zM214 491h1v1h-1zM225 491h1v1h-1zM236 491h1v1h-1zM247 491h1v1h-1zM258 491h1v1h-1zM270 491h1v1h-1zM281 491h1v1h-1zM292 491h1v1h-1zM303 491h1v1h-1zM314 491h1v1h-1zM325 491h1v1h-1zM336 491h1v1h-1zM347 491h1v1h-1zM359 491h1v1h-1zM370 491h1v1h-1zM381 491h1v1h-1zM392 491h1v1h-1zM403 491h1v1h-1zM414 491h1v1h-1zM425 491h1v1h-1zM436 491h1v1h-1zM448 491h1v1h-1zM459 491h1v1h-1zM470 491h1v1h-1zM481 491h1v1h-1zM492 491h1v1h-1zM503 491h1v1h-1zM514 491h1v1h-1zM526 491h1v1h-1zM537 491h1v1h-1zM14 502h1v1h-1zM25 502h1v1h-1zM36 502h1v1h-1zM47 502h1v1h-1zM58 502h1v1h-1zM69 502h1v1h-1zM80 502h1v1h-1zM91 502h1v1h-1zM103 502h1v1h-1zM114 502h1v1h-1zM125 502h1v1h-1zM136 502h1v1h-1zM147 502h1v1h-1zM158 502h1v1h-1zM169 502h1v1h-1zM180 502h1v1h-1zM192 502h1v1h-1zM203 502h1v1h-1zM214 502h1v1h-1zM225 502h1v1h-1zM236 502h1v1h-1zM247 502h1v1h-1zM258 502h1v1h-1zM270 502h1v1h-1zM281 502h1v1h-1zM292 502h1v1h-1zM303 502h1v1h-1zM314 502h1v1h-1zM325 502h1v1h-1zM336 502h1v1h-1zM347 502h1v1h-1zM359 502h1v1h-1zM370 502h1v1h-1zM381 502h1v1h-1zM392 502h1v1h-1zM403 502h1v1h-1zM414 502h1v1h-1zM425 502h1v1h-1zM436 502h1v1h-1zM448 502h1v1h-1zM459 502h1v1h-1zM470 502h1v1h-1zM481 502h1v1h-1zM492 502h1v1h-1zM503 502h1v1h-1zM514 502h1v1h-1zM526 502h1v1h-1zM537 502h1v1h-1zM14 513h1v1h-1zM25 513h1v1h-1zM36 513h1v1h-1zM47 513h1v1h-1zM58 513h1v1h-1zM69 513h1v1h-1zM80 513h1v1h-1zM91 513h1v1h-1zM103 513h1v1h-1zM114 513h1v1h-1zM125 513h1v1h-1zM136 513h1v1h-1zM147 513h1v1h-1zM158 513h1v1h-1zM169 513h1v1h-1zM180 513h1v1h-1zM192 513h1v1h-1zM203 513h1v1h-1zM214 513h1v1h-1zM225 513h1v1h-1zM236 513h1v1h-1zM247 513h1v1h-1zM258 513h1v1h-1zM270 513h1v1h-1zM281 513h1v1h-1zM292 513h1v1h-1zM303 513h1v1h-1zM314 513h1v1h-1zM325 513h1v1h-1zM336 513h1v1h-1zM347 513h1v1h-1zM359 513h1v1h-1zM370 513h1v1h-1zM381 513h1v1h-1zM392 513h1v1h-1zM403 513h1v1h-1zM414 513h1v1h-1zM425 513h1v1h-1zM436 513h1v1h-1zM448 513h1v1h-1zM459 513h1v1h-1zM470 513h1v1h-1zM481 513h1v1h-1zM492 513h1v1h-1zM503 513h1v1h-1zM514 513h1v1h-1zM526 513h1v1h-1zM537 513h1v1h-1zM14 524h1v1h-1zM25 524h1v1h-1zM36 524h1v1h-1zM47 524h1v1h-1zM58 524h1v1h-1zM69 524h1v1h-1zM80 524h1v1h-1zM91 524h1v1h-1zM103 524h1v1h-1zM114 524h1v1h-1zM125 524h1v1h-1zM136 524h1v1h-1zM147 524h1v1h-1zM158 524h1v1h-1zM169 524h1v1h-1zM180 524h1v1h-1zM192 524h1v1h-1zM203 524h1v1h-1zM214 524h1v1h-1zM225 524h1v1h-1zM236 524h1v1h-1zM247 524h1v1h-1zM258 524h1v1h-1zM270 524h1v1h-1zM281 524h1v1h-1zM292 524h1v1h-1zM303 524h1v1h-1zM314 524h1v1h-1zM325 524h1v1h-1zM336 524h1v1h-1zM347 524h1v1h-1zM359 524h1v1h-1zM370 524h1v1h-1zM381 524h1v1h-1zM392 524h1v1h-1zM403 524h1v1h-1zM414 524h1v1h-1zM425 524h1v1h-1zM436 524h1v1h-1zM448 524h1v1h-1zM459 524h1v1h-1zM470 524h1v1h-1zM481 524h1v1h-1zM492 524h1v1h-1zM503 524h1v1h-1zM514 524h1v1h-1zM526 524h1v1h-1zM537 524h1v1h-1zM14 536h1v1h-1zM25 536h1v1h-1zM36 536h1v1h-1zM47 536h1v1h-1zM58 536h1v1h-1zM69 536h1v1h-1zM80 536h1v1h-1zM91 536h1v1h-1zM103 536h1v1h-1zM114 536h1v1h-1zM125 536h1v1h-1zM136 536h1v1h-1zM147 536h1v1h-1zM158 536h1v1h-1zM169 536h1v1h-1zM180 536h1v1h-1zM192 536h1v1h-1zM203 536h1v1h-1zM214 536h1v1h-1zM225 536h1v1h-1zM236 536h1v1h-1zM247 536h1v1h-1zM258 536h1v1h-1zM270 536h1v1h-1zM281 536h1v1h-1zM292 536h1v1h-1zM303 536h1v1h-1zM314 536h1v1h-1zM325 536h1v1h-1zM336 536h1v1h-1zM347 536h1v1h-1zM359 536h1v1h-1zM370 536h1v1h-1zM381 536h1v1h-1zM392 536h1v1h-1zM403 536h1v1h-1zM414 536h1v1h-1zM425 536h1v1h-1zM436 536h1v1h-1zM448 536h1v1h-1zM459 536h1v1h-1zM470 536h1v1h-1zM481 536h1v1h-1zM492 536h1v1h-1zM503 536h1v1h-1zM514 536h1v1h-1zM526 536h1v1h-1zM537 536h1v1h-1zM14 547h1v1h-1zM25 547h1v1h-1zM36 547h1v1h-1zM47 547h1v1h-1zM58 547h1v1h-1zM69 547h1v1h-1zM80 547h1v1h-1zM91 547h1v1h-1zM103 547h1v1h-1zM114 547h1v1h-1zM125 547h1v1h-1zM136 547h1v1h-1zM147 547h1v1h-1zM158 547h1v1h-1zM169 547h1v1h-1zM180 547h1v1h-1zM192 547h1v1h-1zM203 547h1v1h-1zM214 547h1v1h-1zM225 547h1v1h-1zM236 547h1v1h-1zM247 547h1v1h-1zM258 547h1v1h-1zM270 547h1v1h-1zM281 547h1v1h-1zM292 547h1v1h-1zM303 547h1v1h-1zM314 547h1v1h-1zM325 547h1v1h-1zM336 547h1v1h-1zM347 547h1v1h-1zM359 547h1v1h-1zM370 547h1v1h-1zM381 547h1v1h-1zM392 547h1v1h-1zM403 547h1v1h-1zM414 547h1v1h-1zM425 547h1v1h-1zM436 547h1v1h-1zM448 547h1v1h-1zM459 547h1v1h-1zM470 547h1v1h-1zM481 547h1v1h-1zM492 547h1v1h-1zM503 547h1v1h-1zM514 547h1v1h-1zM526 547h1v1h-1zM537 547h1v1h-1zM14 558h1v1h-1zM25 558h1v1h-1zM36 558h1v1h-1zM47 558h1v1h-1zM58 558h1v1h-1zM69 558h1v1h-1zM80 558h1v1h-1zM91 558h1v1h-1zM103 558h1v1h-1zM114 558h1v1h-1zM125 558h1v1h-1zM136 558h1v1h-1zM147 558h1v1h-1zM158 558h1v1h-1zM169 558h1v1h-1zM180 558h1v1h-1zM192 558h1v1h-1zM203 558h1v1h-1zM214 558h1v1h-1zM225 558h1v1h-1zM236 558h1v1h-1zM247 558h1v1h-1zM258 558h1v1h-1zM270 558h1v1h-1zM281 558h1v1h-1zM292 558h1v1h-1zM303 558h1v1h-1zM314 558h1v1h-1zM325 558h1v1h-1zM336 558h1v1h-1zM347 558h1v1h-1zM359 558h1v1h-1zM370 558h1v1h-1zM381 558h1v1h-1zM392 558h1v1h-1zM403 558h1v1h-1zM414 558h1v1h-1zM425 558h1v1h-1zM436 558h1v1h-1zM448 558h1v1h-1zM459 558h1v1h-1zM470 558h1v1h-1zM481 558h1v1h-1zM492 558h1v1h-1zM503 558h1v1h-1zM514 558h1v1h-1zM526 558h1v1h-1zM537 558h1v1h-1zM14 569h1v1h-1zM25 569h1v1h-1zM36 569h1v1h-1zM47 569h1v1h-1zM58 569h1v1h-1zM69 569h1v1h-1zM80 569h1v1h-1zM91 569h1v1h-1zM103 569h1v1h-1zM114 569h1v1h-1zM125 569h1v1h-1zM136 569h1v1h-1zM147 569h1v1h-1zM158 569h1v1h-1zM169 569h1v1h-1zM180 569h1v1h-1zM192 569h1v1h-1zM203 569h1v1h-1zM214 569h1v1h-1zM225 569h1v1h-1zM236 569h1v1h-1zM247 569h1v1h-1zM258 569h1v1h-1zM270 569h1v1h-1zM281 569h1v1h-1zM292 569h1v1h-1zM303 569h1v1h-1zM314 569h1v1h-1zM325 569h1v1h-1zM336 569h1v1h-1zM347 569h1v1h-1zM359 569h1v1h-1zM370 569h1v1h-1zM381 569h1v1h-1zM392 569h1v1h-1zM403 569h1v1h-1zM414 569h1v1h-1zM425 569h1v1h-1zM436 569h1v1h-1zM448 569h1v1h-1zM459 569h1v1h-1zM470 569h1v1h-1zM481 569h1v1h-1zM492 569h1v1h-1zM503 569h1v1h-1zM514 569h1v1h-1zM526 569h1v1h-1zM537 569h1v1h-1zM14 580h1v1h-1zM25 580h1v1h-1zM36 580h1v1h-1zM47 580h1v1h-1zM58 580h1v1h-1zM69 580h1v1h-1zM80 580h1v1h-1zM91 580h1v1h-1zM103 580h1v1h-1zM114 580h1v1h-1zM125 580h1v1h-1zM136 580h1v1h-1zM147 580h1v1h-1zM158 580h1v1h-1zM169 580h1v1h-1zM180 580h1v1h-1zM192 580h1v1h-1zM203 580h1v1h-1zM214 580h1v1h-1zM225 580h1v1h-1zM236 580h1v1h-1zM247 580h1v1h-1zM258 580h1v1h-1zM270 580h1v1h-1zM281 580h1v1h-1zM292 580h1v1h-1zM303 580h1v1h-1zM314 580h1v1h-1zM325 580h1v1h-1zM336 580h1v1h-1zM347 580h1v1h-1zM359 580h1v1h-1zM370 580h1v1h-1zM381 580h1v1h-1zM392 580h1v1h-1zM403 580h1v1h-1zM414 580h1v1h-1zM425 580h1v1h-1zM436 580h1v1h-1zM448 580h1v1h-1zM459 580h1v1h-1zM470 580h1v1h-1zM481 580h1v1h-1zM492 580h1v1h-1zM503 580h1v1h-1zM514 580h1v1h-1zM526 580h1v1h-1zM537 580h1v1h-1zM14 591h1v1h-1zM25 591h1v1h-1zM36 591h1v1h-1zM47 591h1v1h-1zM58 591h1v1h-1zM69 591h1v1h-1zM80 591h1v1h-1zM91 591h1v1h-1zM103 591h1v1h-1zM114 591h1v1h-1zM125 591h1v1h-1zM136 591h1v1h-1zM147 591h1v1h-1zM158 591h1v1h-1zM169 591h1v1h-1zM180 591h1v1h-1zM192 591h1v1h-1zM203 591h1v1h-1zM214 591h1v1h-1zM225 591h1v1h-1zM236 591h1v1h-1zM247 591h1v1h-1zM258 591h1v1h-1zM270 591h1v1h-1zM281 591h1v1h-1zM292 591h1v1h-1zM303 591h1v1h-1zM314 591h1v1h-1zM325 591h1v1h-1zM336 591h1v1h-1zM347 591h1v1h-1zM359 591h1v1h-1zM370 591h1v1h-1zM381 591h1v1h-1zM392 591h1v1h-1zM403 591h1v1h-1zM414 591h1v1h-1zM425 591h1v1h-1zM436 591h1v1h-1zM448 591h1v1h-1zM459 591h1v1h-1zM470 591h1v1h-1zM481 591h1v1h-1zM492 591h1v1h-1zM503 591h1v1h-1zM514 591h1v1h-1zM526 591h1v1h-1zM537 591h1v1h-1zM14 602h1v1h-1zM25 602h1v1h-1zM36 602h1v1h-1zM47 602h1v1h-1zM58 602h1v1h-1zM69 602h1v1h-1zM80 602h1v1h-1zM91 602h1v1h-1zM103 602h1v1h-1zM114 602h1v1h-1zM125 602h1v1h-1zM136 602h1v1h-1zM147 602h1v1h-1zM158 602h1v1h-1zM169 602h1v1h-1zM180 602h1v1h-1zM192 602h1v1h-1zM203 602h1v1h-1zM214 602h1v1h-1zM225 602h1v1h-1zM236 602h1v1h-1zM247 602h1v1h-1zM258 602h1v1h-1zM270 602h1v1h-1zM281 602h1v1h-1zM292 602h1v1h-1zM303 602h1v1h-1zM314 602h1v1h-1zM325 602h1v1h-1zM336 602h1v1h-1zM347 602h1v1h-1zM359 602h1v1h-1zM370 602h1v1h-1zM381 602h1v1h-1zM392 602h1v1h-1zM403 602h1v1h-1zM414 602h1v1h-1zM425 602h1v1h-1zM436 602h1v1h-1zM448 602h1v1h-1zM459 602h1v1h-1zM470 602h1v1h-1zM481 602h1v1h-1zM492 602h1v1h-1zM503 602h1v1h-1zM514 602h1v1h-1zM526 602h1v1h-1zM537 602h1v1h-1zM14 613h1v1h-1zM25 613h1v1h-1zM36 613h1v1h-1zM47 613h1v1h-1zM58 613h1v1h-1zM69 613h1v1h-1zM80 613h1v1h-1zM91 613h1v1h-1zM103 613h1v1h-1zM114 613h1v1h-1zM125 613h1v1h-1zM136 613h1v1h-1zM147 613h1v1h-1zM158 613h1v1h-1zM169 613h1v1h-1zM180 613h1v1h-1zM192 613h1v1h-1zM203 613h1v1h-1zM214 613h1v1h-1zM225 613h1v1h-1zM236 613h1v1h-1zM247 613h1v1h-1zM258 613h1v1h-1zM270 613h1v1h-1zM281 613h1v1h-1zM292 613h1v1h-1zM303 613h1v1h-1zM314 613h1v1h-1zM325 613h1v1h-1zM336 613h1v1h-1zM347 613h1v1h-1zM359 613h1v1h-1zM370 613h1v1h-1zM381 613h1v1h-1zM392 613h1v1h-1zM403 613h1v1h-1zM414 613h1v1h-1zM425 613h1v1h-1zM436 613h1v1h-1zM448 613h1v1h-1zM459 613h1v1h-1zM470 613h1v1h-1zM481 613h1v1h-1zM492 613h1v1h-1zM503 613h1v1h-1zM514 613h1v1h-1zM526 613h1v1h-1zM537 613h1v1h-1zM14 625h1v1h-1zM25 625h1v1h-1zM36 625h1v1h-1zM47 625h1v1h-1zM58 625h1v1h-1zM69 625h1v1h-1zM80 625h1v1h-1zM91 625h1v1h-1zM103 625h1v1h-1zM114 625h1v1h-1zM125 625h1v1h-1zM136 625h1v1h-1zM147 625h1v1h-1zM158 625h1v1h-1zM169 625h1v1h-1zM180 625h1v1h-1zM192 625h1v1h-1zM203 625h1v1h-1zM214 625h1v1h-1zM225 625h1v1h-1zM236 625h1v1h-1zM247 625h1v1h-1zM258 625h1v1h-1zM270 625h1v1h-1zM281 625h1v1h-1zM292 625h1v1h-1zM303 625h1v1h-1zM314 625h1v1h-1zM325 625h1v1h-1zM336 625h1v1h-1zM347 625h1v1h-1zM359 625h1v1h-1zM370 625h1v1h-1zM381 625h1v1h-1zM392 625h1v1h-1zM403 625h1v1h-1zM414 625h1v1h-1zM425 625h1v1h-1zM436 625h1v1h-1zM448 625h1v1h-1zM459 625h1v1h-1zM470 625h1v1h-1zM481 625h1v1h-1zM492 625h1v1h-1zM503 625h1v1h-1zM514 625h1v1h-1zM526 625h1v1h-1zM537 625h1v1h-1zM14 636h1v1h-1zM25 636h1v1h-1zM36 636h1v1h-1zM47 636h1v1h-1zM58 636h1v1h-1zM69 636h1v1h-1zM80 636h1v1h-1zM91 636h1v1h-1zM103 636h1v1h-1zM114 636h1v1h-1zM125 636h1v1h-1zM136 636h1v1h-1zM147 636h1v1h-1zM158 636h1v1h-1zM169 636h1v1h-1zM180 636h1v1h-1zM192 636h1v1h-1zM203 636h1v1h-1zM214 636h1v1h-1zM225 636h1v1h-1zM236 636h1v1h-1zM247 636h1v1h-1zM258 636h1v1h-1zM270 636h1v1h-1zM281 636h1v1h-1zM292 636h1v1h-1zM303 636h1v1h-1zM314 636h1v1h-1zM325 636h1v1h-1zM336 636h1v1h-1zM347 636h1v1h-1zM359 636h1v1h-1zM370 636h1v1h-1zM381 636h1v1h-1zM392 636h1v1h-1zM403 636h1v1h-1zM414 636h1v1h-1zM425 636h1v1h-1zM436 636h1v1h-1zM448 636h1v1h-1zM459 636h1v1h-1zM470 636h1v1h-1zM481 636h1v1h-1zM492 636h1v1h-1zM503 636h1v1h-1zM514 636h1v1h-1zM526 636h1v1h-1zM537 636h1v1h-1zM14 647h1v1h-1zM25 647h1v1h-1zM36 647h1v1h-1zM47 647h1v1h-1zM58 647h1v1h-1zM69 647h1v1h-1zM80 647h1v1h-1zM91 647h1v1h-1zM103 647h1v1h-1zM114 647h1v1h-1zM125 647h1v1h-1zM136 647h1v1h-1zM147 647h1v1h-1zM158 647h1v1h-1zM169 647h1v1h-1zM180 647h1v1h-1zM192 647h1v1h-1zM203 647h1v1h-1zM214 647h1v1h-1zM225 647h1v1h-1zM236 647h1v1h-1zM247 647h1v1h-1zM258 647h1v1h-1zM270 647h1v1h-1zM281 647h1v1h-1zM292 647h1v1h-1zM303 647h1v1h-1zM314 647h1v1h-1zM325 647h1v1h-1zM336 647h1v1h-1zM347 647h1v1h-1zM359 647h1v1h-1zM370 647h1v1h-1zM381 647h1v1h-1zM392 647h1v1h-1zM403 647h1v1h-1zM414 647h1v1h-1zM425 647h1v1h-1zM436 647h1v1h-1zM448 647h1v1h-1zM459 647h1v1h-1zM470 647h1v1h-1zM481 647h1v1h-1zM492 647h1v1h-1zM503 647h1v1h-1zM514 647h1v1h-1zM526 647h1v1h-1zM537 647h1v1h-1zM14 658h1v1h-1zM25 658h1v1h-1zM36 658h1v1h-1zM47 658h1v1h-1zM58 658h1v1h-1zM69 658h1v1h-1zM80 658h1v1h-1zM91 658h1v1h-1zM103 658h1v1h-1zM114 658h1v1h-1zM125 658h1v1h-1zM136 658h1v1h-1zM147 658h1v1h-1zM158 658h1v1h-1zM169 658h1v1h-1zM180 658h1v1h-1zM192 658h1v1h-1zM203 658h1v1h-1zM214 658h1v1h-1zM225 658h1v1h-1zM236 658h1v1h-1zM247 658h1v1h-1zM258 658h1v1h-1zM270 658h1v1h-1zM281 658h1v1h-1zM292 658h1v1h-1zM303 658h1v1h-1zM314 658h1v1h-1zM325 658h1v1h-1zM336 658h1v1h-1zM347 658h1v1h-1zM359 658h1v1h-1zM370 658h1v1h-1zM381 658h1v1h-1zM392 658h1v1h-1zM403 658h1v1h-1zM414 658h1v1h-1zM425 658h1v1h-1zM436 658h1v1h-1zM448 658h1v1h-1zM459 658h1v1h-1zM470 658h1v1h-1zM481 658h1v1h-1zM492 658h1v1h-1zM503 658h1v1h-1zM514 658h1v1h-1zM526 658h1v1h-1zM537 658h1v1h-1zM14 669h1v1h-1zM25 669h1v1h-1zM36 669h1v1h-1zM47 669h1v1h-1zM58 669h1v1h-1zM69 669h1v1h-1zM80 669h1v1h-1zM91 669h1v1h-1zM103 669h1v1h-1zM114 669h1v1h-1zM125 669h1v1h-1zM136 669h1v1h-1zM147 669h1v1h-1zM158 669h1v1h-1zM169 669h1v1h-1zM180 669h1v1h-1zM192 669h1v1h-1zM203 669h1v1h-1zM214 669h1v1h-1zM225 669h1v1h-1zM236 669h1v1h-1zM247 669h1v1h-1zM258 669h1v1h-1zM270 669h1v1h-1zM281 669h1v1h-1zM292 669h1v1h-1zM303 669h1v1h-1zM314 669h1v1h-1zM325 669h1v1h-1zM336 669h1v1h-1zM347 669h1v1h-1zM359 669h1v1h-1zM370 669h1v1h-1zM381 669h1v1h-1zM392 669h1v1h-1zM403 669h1v1h-1zM414 669h1v1h-1zM425 669h1v1h-1zM436 669h1v1h-1zM448 669h1v1h-1zM459 669h1v1h-1zM470 669h1v1h-1zM481 669h1v1h-1zM492 669h1v1h-1zM503 669h1v1h-1zM514 669h1v1h-1zM526 669h1v1h-1zM537 669h1v1h-1zM14 680h1v1h-1zM25 680h1v1h-1zM36 680h1v1h-1zM47 680h1v1h-1zM58 680h1v1h-1zM69 680h1v1h-1zM80 680h1v1h-1zM91 680h1v1h-1zM103 680h1v1h-1zM114 680h1v1h-1zM125 680h1v1h-1zM136 680h1v1h-1zM147 680h1v1h-1zM158 680h1v1h-1zM169 680h1v1h-1zM180 680h1v1h-1zM192 680h1v1h-1zM203 680h1v1h-1zM214 680h1v1h-1zM225 680h1v1h-1zM236 680h1v1h-1zM247 680h1v1h-1zM258 680h1v1h-1zM270 680h1v1h-1zM281 680h1v1h-1zM292 680h1v1h-1zM303 680h1v1h-1zM314 680h1v1h-1zM325 680h1v1h-1zM336 680h1v1h-1zM347 680h1v1h-1zM359 680h1v1h-1zM370 680h1v1h-1zM381 680h1v1h-1zM392 680h1v1h-1zM403 680h1v1h-1zM414 680h1v1h-1zM425 680h1v1h-1zM436 680h1v1h-1zM448 680h1v1h-1zM459 680h1v1h-1zM470 680h1v1h-1zM481 680h1v1h-1zM492 680h1v1h-1zM503 680h1v1h-1zM514 680h1v1h-1zM526 680h1v1h-1zM537 680h1v1h-1zM14 691h1v1h-1zM25 691h1v1h-1zM36 691h1v1h-1zM47 691h1v1h-1zM58 691h1v1h-1zM69 691h1v1h-1zM80 691h1v1h-1zM91 691h1v1h-1zM103 691h1v1h-1zM114 691h1v1h-1zM125 691h1v1h-1zM136 691h1v1h-1zM147 691h1v1h-1zM158 691h1v1h-1zM169 691h1v1h-1zM180 691h1v1h-1zM192 691h1v1h-1zM203 691h1v1h-1zM214 691h1v1h-1zM225 691h1v1h-1zM236 691h1v1h-1zM247 691h1v1h-1zM258 691h1v1h-1zM270 691h1v1h-1zM281 691h1v1h-1zM292 691h1v1h-1zM303 691h1v1h-1zM314 691h1v1h-1zM325 691h1v1h-1zM336 691h1v1h-1zM347 691h1v1h-1zM359 691h1v1h-1zM370 691h1v1h-1zM381 691h1v1h-1zM392 691h1v1h-1zM403 691h1v1h-1zM414 691h1v1h-1zM425 691h1v1h-1zM436 691h1v1h-1zM448 691h1v1h-1zM459 691h1v1h-1zM470 691h1v1h-1zM481 691h1v1h-1zM492 691h1v1h-1zM503 691h1v1h-1zM514 691h1v1h-1zM526 691h1v1h-1zM537 691h1v1h-1zM14 702h1v1h-1zM25 702h1v1h-1zM36 702h1v1h-1zM47 702h1v1h-1zM58 702h1v1h-1zM69 702h1v1h-1zM80 702h1v1h-1zM91 702h1v1h-1zM103 702h1v1h-1zM114 702h1v1h-1zM125 702h1v1h-1zM136 702h1v1h-1zM147 702h1v1h-1zM158 702h1v1h-1zM169 702h1v1h-1zM180 702h1v1h-1zM192 702h1v1h-1zM203 702h1v1h-1zM214 702h1v1h-1zM225 702h1v1h-1zM236 702h1v1h-1zM247 702h1v1h-1zM258 702h1v1h-1zM270 702h1v1h-1zM281 702h1v1h-1zM292 702h1v1h-1zM303 702h1v1h-1zM314 702h1v1h-1zM325 702h1v1h-1zM336 702h1v1h-1zM347 702h1v1h-1zM359 702h1v1h-1zM370 702h1v1h-1zM381 702h1v1h-1zM392 702h1v1h-1zM403 702h1v1h-1zM414 702h1v1h-1zM425 702h1v1h-1zM436 702h1v1h-1zM448 702h1v1h-1zM459 702h1v1h-1zM470 702h1v1h-1zM481 702h1v1h-1zM492 702h1v1h-1zM503 702h1v1h-1zM514 702h1v1h-1zM526 702h1v1h-1zM537 702h1v1h-1zM14 713h1v1h-1zM25 713h1v1h-1zM36 713h1v1h-1zM47 713h1v1h-1zM58 713h1v1h-1zM69 713h1v1h-1zM80 713h1v1h-1zM91 713h1v1h-1zM103 713h1v1h-1zM114 713h1v1h-1zM125 713h1v1h-1zM136 713h1v1h-1zM147 713h1v1h-1zM158 713h1v1h-1zM169 713h1v1h-1zM180 713h1v1h-1zM192 713h1v1h-1zM203 713h1v1h-1zM214 713h1v1h-1zM225 713h1v1h-1zM236 713h1v1h-1zM247 713h1v1h-1zM258 713h1v1h-1zM270 713h1v1h-1zM281 713h1v1h-1zM292 713h1v1h-1zM303 713h1v1h-1zM314 713h1v1h-1zM325 713h1v1h-1zM336 713h1v1h-1zM347 713h1v1h-1zM359 713h1v1h-1zM370 713h1v1h-1zM381 713h1v1h-1zM392 713h1v1h-1zM403 713h1v1h-1zM414 713h1v1h-1zM425 713h1v1h-1zM436 713h1v1h-1zM448 713h1v1h-1zM459 713h1v1h-1zM470 713h1v1h-1zM481 713h1v1h-1zM492 713h1v1h-1zM503 713h1v1h-1zM514 713h1v1h-1zM526 713h1v1h-1zM537 713h1v1h-1zM14 725h1v1h-1zM25 725h1v1h-1zM36 725h1v1h-1zM47 725h1v1h-1zM58 725h1v1h-1zM69 725h1v1h-1zM80 725h1v1h-1zM91 725h1v1h-1zM103 725h1v1h-1zM114 725h1v1h-1zM125 725h1v1h-1zM136 725h1v1h-1zM147 725h1v1h-1zM158 725h1v1h-1zM169 725h1v1h-1zM180 725h1v1h-1zM192 725h1v1h-1zM203 725h1v1h-1zM214 725h1v1h-1zM225 725h1v1h-1zM236 725h1v1h-1zM247 725h1v1h-1zM258 725h1v1h-1zM270 725h1v1h-1zM281 725h1v1h-1zM292 725h1v1h-1zM303 725h1v1h-1zM314 725h1v1h-1zM325 725h1v1h-1zM336 725h1v1h-1zM347 725h1v1h-1zM359 725h1v1h-1zM370 725h1v1h-1zM381 725h1v1h-1zM392 725h1v1h-1zM403 725h1v1h-1zM414 725h1v1h-1zM425 725h1v1h-1zM436 725h1v1h-1zM448 725h1v1h-1zM459 725h1v1h-1zM470 725h1v1h-1zM481 725h1v1h-1zM492 725h1v1h-1zM503 725h1v1h-1zM514 725h1v1h-1zM526 725h1v1h-1zM537 725h1v1h-1zM14 736h1v1h-1zM25 736h1v1h-1zM36 736h1v1h-1zM47 736h1v1h-1zM58 736h1v1h-1zM69 736h1v1h-1zM80 736h1v1h-1zM91 736h1v1h-1zM103 736h1v1h-1zM114 736h1v1h-1zM125 736h1v1h-1zM136 736h1v1h-1zM147 736h1v1h-1zM158 736h1v1h-1zM169 736h1v1h-1zM180 736h1v1h-1zM192 736h1v1h-1zM203 736h1v1h-1zM214 736h1v1h-1zM225 736h1v1h-1zM236 736h1v1h-1zM247 736h1v1h-1zM258 736h1v1h-1zM270 736h1v1h-1zM281 736h1v1h-1zM292 736h1v1h-1zM303 736h1v1h-1zM314 736h1v1h-1zM325 736h1v1h-1zM336 736h1v1h-1zM347 736h1v1h-1zM359 736h1v1h-1zM370 736h1v1h-1zM381 736h1v1h-1zM392 736h1v1h-1zM403 736h1v1h-1zM414 736h1v1h-1zM425 736h1v1h-1zM436 736h1v1h-1zM448 736h1v1h-1zM459 736h1v1h-1zM470 736h1v1h-1zM481 736h1v1h-1zM492 736h1v1h-1zM503 736h1v1h-1zM514 736h1v1h-1zM526 736h1v1h-1zM537 736h1v1h-1zM14 747h1v1h-1zM25 747h1v1h-1zM36 747h1v1h-1zM47 747h1v1h-1zM58 747h1v1h-1zM69 747h1v1h-1zM80 747h1v1h-1zM91 747h1v1h-1zM103 747h1v1h-1zM114 747h1v1h-1zM125 747h1v1h-1zM136 747h1v1h-1zM147 747h1v1h-1zM158 747h1v1h-1zM169 747h1v1h-1zM180 747h1v1h-1zM192 747h1v1h-1zM203 747h1v1h-1zM214 747h1v1h-1zM225 747h1v1h-1zM236 747h1v1h-1zM247 747h1v1h-1zM258 747h1v1h-1zM270 747h1v1h-1zM281 747h1v1h-1zM292 747h1v1h-1zM303 747h1v1h-1zM314 747h1v1h-1zM325 747h1v1h-1zM336 747h1v1h-1zM347 747h1v1h-1zM359 747h1v1h-1zM370 747h1v1h-1zM381 747h1v1h-1zM392 747h1v1h-1zM403 747h1v1h-1zM414 747h1v1h-1zM425 747h1v1h-1zM436 747h1v1h-1zM448 747h1v1h-1zM459 747h1v1h-1zM470 747h1v1h-1zM481 747h1v1h-1zM492 747h1v1h-1zM503 747h1v1h-1zM514 747h1v1h-1zM526 747h1v1h-1zM537 747h1v1h-1zM14 758h1v1h-1zM25 758h1v1h-1zM36 758h1v1h-1zM47 758h1v1h-1zM58 758h1v1h-1zM69 758h1v1h-1zM80 758h1v1h-1zM91 758h1v1h-1zM103 758h1v1h-1zM114 758h1v1h-1zM125 758h1v1h-1zM136 758h1v1h-1zM147 758h1v1h-1zM158 758h1v1h-1zM169 758h1v1h-1zM180 758h1v1h-1zM192 758h1v1h-1zM203 758h1v1h-1zM214 758h1v1h-1zM225 758h1v1h-1zM236 758h1v1h-1zM247 758h1v1h-1zM258 758h1v1h-1zM270 758h1v1h-1zM281 758h1v1h-1zM292 758h1v1h-1zM303 758h1v1h-1zM314 758h1v1h-1zM325 758h1v1h-1zM336 758h1v1h-1zM347 758h1v1h-1zM359 758h1v1h-1zM370 758h1v1h-1zM381 758h1v1h-1zM392 758h1v1h-1zM403 758h1v1h-1zM414 758h1v1h-1zM425 758h1v1h-1zM436 758h1v1h-1zM448 758h1v1h-1zM459 758h1v1h-1zM470 758h1v1h-1zM481 758h1v1h-1zM492 758h1v1h-1zM503 758h1v1h-1zM514 758h1v1h-1zM526 758h1v1h-1zM537 758h1v1h-1zM14 769h1v1h-1zM25 769h1v1h-1zM36 769h1v1h-1zM47 769h1v1h-1zM58 769h1v1h-1zM69 769h1v1h-1zM80 769h1v1h-1zM91 769h1v1h-1zM103 769h1v1h-1zM114 769h1v1h-1zM125 769h1v1h-1zM136 769h1v1h-1zM147 769h1v1h-1zM158 769h1v1h-1zM169 769h1v1h-1zM180 769h1v1h-1zM192 769h1v1h-1zM203 769h1v1h-1zM214 769h1v1h-1zM225 769h1v1h-1zM236 769h1v1h-1zM247 769h1v1h-1zM258 769h1v1h-1zM270 769h1v1h-1zM281 769h1v1h-1zM292 769h1v1h-1zM303 769h1v1h-1zM314 769h1v1h-1zM325 769h1v1h-1zM336 769h1v1h-1zM347 769h1v1h-1zM359 769h1v1h-1zM370 769h1v1h-1zM381 769h1v1h-1zM392 769h1v1h-1zM403 769h1v1h-1zM414 769h1v1h-1zM425 769h1v1h-1zM436 769h1v1h-1zM448 769h1v1h-1zM459 769h1v1h-1zM470 769h1v1h-1zM481 769h1v1h-1zM492 769h1v1h-1zM503 769h1v1h-1zM514 769h1v1h-1zM526 769h1v1h-1zM537 769h1v1h-1zM14 780h1v1h-1zM25 780h1v1h-1zM36 780h1v1h-1zM47 780h1v1h-1zM58 780h1v1h-1zM69 780h1v1h-1zM80 780h1v1h-1zM91 780h1v1h-1zM103 780h1v1h-1zM114 780h1v1h-1zM125 780h1v1h-1zM136 780h1v1h-1zM147 780h1v1h-1zM158 780h1v1h-1zM169 780h1v1h-1zM180 780h1v1h-1zM192 780h1v1h-1zM203 780h1v1h-1zM214 780h1v1h-1zM225 780h1v1h-1zM236 780h1v1h-1zM247 780h1v1h-1zM258 780h1v1h-1zM270 780h1v1h-1zM281 780h1v1h-1zM292 780h1v1h-1zM303 780h1v1h-1zM314 780h1v1h-1zM325 780h1v1h-1zM336 780h1v1h-1zM347 780h1v1h-1zM359 780h1v1h-1zM370 780h1v1h-1zM381 780h1v1h-1zM392 780h1v1h-1zM403 780h1v1h-1zM414 780h1v1h-1zM425 780h1v1h-1zM436 780h1v1h-1zM448 780h1v1h-1zM459 780h1v1h-1zM470 780h1v1h-1zM481 780h1v1h-1zM492 780h1v1h-1zM503 780h1v1h-1zM514 780h1v1h-1zM526 780h1v1h-1zM537 780h1v1h-1zM14 791h1v1h-1zM25 791h1v1h-1zM36 791h1v1h-1zM47 791h1v1h-1zM58 791h1v1h-1zM69 791h1v1h-1zM80 791h1v1h-1zM91 791h1v1h-1zM103 791h1v1h-1zM114 791h1v1h-1zM125 791h1v1h-1zM136 791h1v1h-1zM147 791h1v1h-1zM158 791h1v1h-1zM169 791h1v1h-1zM180 791h1v1h-1zM192 791h1v1h-1zM203 791h1v1h-1zM214 791h1v1h-1zM225 791h1v1h-1zM236 791h1v1h-1zM247 791h1v1h-1zM258 791h1v1h-1zM270 791h1v1h-1zM281 791h1v1h-1zM292 791h1v1h-1zM303 791h1v1h-1zM314 791h1v1h-1zM325 791h1v1h-1zM336 791h1v1h-1zM347 791h1v1h-1zM359 791h1v1h-1zM370 791h1v1h-1zM381 791h1v1h-1zM392 791h1v1h-1zM403 791h1v1h-1zM414 791h1v1h-1zM425 791h1v1h-1zM436 791h1v1h-1zM448 791h1v1h-1zM459 791h1v1h-1zM470 791h1v1h-1zM481 791h1v1h-1zM492 791h1v1h-1zM503 791h1v1h-1zM514 791h1v1h-1zM526 791h1v1h-1zM537 791h1v1h-1zM14 802h1v1h-1zM25 802h1v1h-1zM36 802h1v1h-1zM47 802h1v1h-1zM58 802h1v1h-1zM69 802h1v1h-1zM80 802h1v1h-1zM91 802h1v1h-1zM103 802h1v1h-1zM114 802h1v1h-1zM125 802h1v1h-1zM136 802h1v1h-1zM147 802h1v1h-1zM158 802h1v1h-1zM169 802h1v1h-1zM180 802h1v1h-1zM192 802h1v1h-1zM203 802h1v1h-1zM214 802h1v1h-1zM225 802h1v1h-1zM236 802h1v1h-1zM247 802h1v1h-1zM258 802h1v1h-1zM270 802h1v1h-1zM281 802h1v1h-1zM292 802h1v1h-1zM303 802h1v1h-1zM314 802h1v1h-1zM325 802h1v1h-1zM336 802h1v1h-1zM347 802h1v1h-1zM359 802h1v1h-1zM370 802h1v1h-1zM381 802h1v1h-1zM392 802h1v1h-1zM403 802h1v1h-1zM414 802h1v1h-1zM425 802h1v1h-1zM436 802h1v1h-1zM448 802h1v1h-1zM459 802h1v1h-1zM470 802h1v1h-1zM481 802h1v1h-1zM492 802h1v1h-1zM503 802h1v1h-1zM514 802h1v1h-1zM526 802h1v1h-1zM537 802h1v1h-1zM14 814h1v1h-1zM25 814h1v1h-1zM36 814h1v1h-1zM47 814h1v1h-1zM58 814h1v1h-1zM69 814h1v1h-1zM80 814h1v1h-1zM91 814h1v1h-1zM103 814h1v1h-1zM114 814h1v1h-1zM125 814h1v1h-1zM136 814h1v1h-1zM147 814h1v1h-1zM158 814h1v1h-1zM169 814h1v1h-1zM180 814h1v1h-1zM192 814h1v1h-1zM203 814h1v1h-1zM214 814h1v1h-1zM225 814h1v1h-1zM236 814h1v1h-1zM247 814h1v1h-1zM258 814h1v1h-1zM270 814h1v1h-1zM281 814h1v1h-1zM292 814h1v1h-1zM303 814h1v1h-1zM314 814h1v1h-1zM325 814h1v1h-1zM336 814h1v1h-1zM347 814h1v1h-1zM359 814h1v1h-1zM370 814h1v1h-1zM381 814h1v1h-1zM392 814h1v1h-1zM403 814h1v1h-1zM414 814h1v1h-1zM425 814h1v1h-1zM436 814h1v1h-1zM448 814h1v1h-1zM459 814h1v1h-1zM470 814h1v1h-1zM481 814h1v1h-1zM492 814h1v1h-1zM503 814h1v1h-1zM514 814h1v1h-1zM526 814h1v1h-1zM537 814h1v1h-1zM14 825h1v1h-1zM25 825h1v1h-1zM36 825h1v1h-1zM47 825h1v1h-1zM58 825h1v1h-1zM69 825h1v1h-1zM80 825h1v1h-1zM91 825h1v1h-1zM103 825h1v1h-1zM114 825h1v1h-1zM125 825h1v1h-1zM136 825h1v1h-1zM147 825h1v1h-1zM158 825h1v1h-1zM169 825h1v1h-1zM180 825h1v1h-1zM192 825h1v1h-1zM203 825h1v1h-1zM214 825h1v1h-1zM225 825h1v1h-1zM236 825h1v1h-1zM247 825h1v1h-1zM258 825h1v1h-1zM270 825h1v1h-1zM281 825h1v1h-1zM292 825h1v1h-1zM303 825h1v1h-1zM314 825h1v1h-1zM325 825h1v1h-1zM336 825h1v1h-1zM347 825h1v1h-1zM359 825h1v1h-1zM370 825h1v1h-1zM381 825h1v1h-1zM392 825h1v1h-1zM403 825h1v1h-1zM414 825h1v1h-1zM425 825h1v1h-1zM436 825h1v1h-1zM448 825h1v1h-1zM459 825h1v1h-1zM470 825h1v1h-1zM481 825h1v1h-1zM492 825h1v1h-1zM503 825h1v1h-1zM514 825h1v1h-1zM526 825h1v1h-1zM537 825h1v1h-1zM14 836h1v1h-1zM25 836h1v1h-1zM36 836h1v1h-1zM47 836h1v1h-1zM58 836h1v1h-1zM69 836h1v1h-1zM80 836h1v1h-1zM91 836h1v1h-1zM103 836h1v1h-1zM114 836h1v1h-1zM125 836h1v1h-1zM136 836h1v1h-1zM147 836h1v1h-1zM158 836h1v1h-1zM169 836h1v1h-1zM180 836h1v1h-1zM192 836h1v1h-1zM203 836h1v1h-1zM214 836h1v1h-1zM225 836h1v1h-1zM236 836h1v1h-1zM247 836h1v1h-1zM258 836h1v1h-1zM270 836h1v1h-1zM281 836h1v1h-1zM292 836h1v1h-1zM303 836h1v1h-1zM314 836h1v1h-1zM325 836h1v1h-1zM336 836h1v1h-1zM347 836h1v1h-1zM359 836h1v1h-1zM370 836h1v1h-1zM381 836h1v1h-1zM392 836h1v1h-1zM403 836h1v1h-1zM414 836h1v1h-1zM425 836h1v1h-1zM436 836h1v1h-1zM448 836h1v1h-1zM459 836h1v1h-1zM470 836h1v1h-1zM481 836h1v1h-1zM492 836h1v1h-1zM503 836h1v1h-1zM514 836h1v1h-1zM526 836h1v1h-1zM537 836h1v1h-1zM14 847h1v1h-1zM25 847h1v1h-1zM36 847h1v1h-1zM47 847h1v1h-1zM58 847h1v1h-1zM69 847h1v1h-1zM80 847h1v1h-1zM91 847h1v1h-1zM103 847h1v1h-1zM114 847h1v1h-1zM125 847h1v1h-1zM136 847h1v1h-1zM147 847h1v1h-1zM158 847h1v1h-1zM169 847h1v1h-1zM180 847h1v1h-1zM192 847h1v1h-1zM203 847h1v1h-1zM214 847h1v1h-1zM225 847h1v1h-1zM236 847h1v1h-1zM247 847h1v1h-1zM258 847h1v1h-1zM270 847h1v1h-1zM281 847h1v1h-1zM292 847h1v1h-1zM303 847h1v1h-1zM314 847h1v1h-1zM325 847h1v1h-1zM336 847h1v1h-1zM347 847h1v1h-1zM359 847h1v1h-1zM370 847h1v1h-1zM381 847h1v1h-1zM392 847h1v1h-1zM403 847h1v1h-1zM414 847h1v1h-1zM425 847h1v1h-1zM436 847h1v1h-1zM448 847h1v1h-1zM459 847h1v1h-1zM470 847h1v1h-1zM481 847h1v1h-1zM492 847h1v1h-1zM503 847h1v1h-1zM514 847h1v1h-1zM526 847h1v1h-1zM537 847h1v1h-1zM14 858h1v1h-1zM25 858h1v1h-1zM36 858h1v1h-1zM47 858h1v1h-1zM58 858h1v1h-1zM69 858h1v1h-1zM80 858h1v1h-1zM91 858h1v1h-1zM103 858h1v1h-1zM114 858h1v1h-1zM125 858h1v1h-1zM136 858h1v1h-1zM147 858h1v1h-1zM158 858h1v1h-1zM169 858h1v1h-1zM180 858h1v1h-1zM192 858h1v1h-1zM203 858h1v1h-1zM214 858h1v1h-1zM225 858h1v1h-1zM236 858h1v1h-1zM247 858h1v1h-1zM258 858h1v1h-1zM270 858h1v1h-1zM281 858h1v1h-1zM292 858h1v1h-1zM303 858h1v1h-1zM314 858h1v1h-1zM325 858h1v1h-1zM336 858h1v1h-1zM347 858h1v1h-1zM359 858h1v1h-1zM370 858h1v1h-1zM381 858h1v1h-1zM392 858h1v1h-1zM403 858h1v1h-1zM414 858h1v1h-1zM425 858h1v1h-1zM436 858h1v1h-1zM448 858h1v1h-1zM459 858h1v1h-1zM470 858h1v1h-1zM481 858h1v1h-1zM492 858h1v1h-1zM503 858h1v1h-1zM514 858h1v1h-1zM526 858h1v1h-1zM537 858h1v1h-1zM14 869h1v1h-1zM25 869h1v1h-1zM36 869h1v1h-1zM47 869h1v1h-1zM58 869h1v1h-1zM69 869h1v1h-1zM80 869h1v1h-1zM91 869h1v1h-1zM103 869h1v1h-1zM114 869h1v1h-1zM125 869h1v1h-1zM136 869h1v1h-1zM147 869h1v1h-1zM158 869h1v1h-1zM169 869h1v1h-1zM180 869h1v1h-1zM192 869h1v1h-1zM203 869h1v1h-1zM214 869h1v1h-1zM225 869h1v1h-1zM236 869h1v1h-1zM247 869h1v1h-1zM258 869h1v1h-1zM270 869h1v1h-1zM281 869h1v1h-1zM292 869h1v1h-1zM303 869h1v1h-1zM314 869h1v1h-1zM325 869h1v1h-1zM336 869h1v1h-1zM347 869h1v1h-1zM359 869h1v1h-1zM370 869h1v1h-1zM381 869h1v1h-1zM392 869h1v1h-1zM403 869h1v1h-1zM414 869h1v1h-1zM425 869h1v1h-1zM436 869h1v1h-1zM448 869h1v1h-1zM459 869h1v1h-1zM470 869h1v1h-1zM481 869h1v1h-1zM492 869h1v1h-1zM503 869h1v1h-1zM514 869h1v1h-1zM526 869h1v1h-1zM537 869h1v1h-1zM14 880h1v1h-1zM25 880h1v1h-1zM36 880h1v1h-1zM47 880h1v1h-1zM58 880h1v1h-1zM69 880h1v1h-1zM80 880h1v1h-1zM91 880h1v1h-1zM103 880h1v1h-1zM114 880h1v1h-1zM125 880h1v1h-1zM136 880h1v1h-1zM147 880h1v1h-1zM158 880h1v1h-1zM169 880h1v1h-1zM180 880h1v1h-1zM192 880h1v1h-1zM203 880h1v1h-1zM214 880h1v1h-1zM225 880h1v1h-1zM236 880h1v1h-1zM247 880h1v1h-1zM258 880h1v1h-1zM270 880h1v1h-1zM281 880h1v1h-1zM292 880h1v1h-1zM303 880h1v1h-1zM314 880h1v1h-1zM325 880h1v1h-1zM336 880h1v1h-1zM347 880h1v1h-1zM359 880h1v1h-1zM370 880h1v1h-1zM381 880h1v1h-1zM392 880h1v1h-1zM403 880h1v1h-1zM414 880h1v1h-1zM425 880h1v1h-1zM436 880h1v1h-1zM448 880h1v1h-1zM459 880h1v1h-1zM470 880h1v1h-1zM481 880h1v1h-1zM492 880h1v1h-1zM503 880h1v1h-1zM514 880h1v1h-1zM526 880h1v1h-1zM537 880h1v1h-1zM14 891h1v1h-1zM25 891h1v1h-1zM36 891h1v1h-1zM47 891h1v1h-1zM58 891h1v1h-1zM69 891h1v1h-1zM80 891h1v1h-1zM91 891h1v1h-1zM103 891h1v1h-1zM114 891h1v1h-1zM125 891h1v1h-1zM136 891h1v1h-1zM147 891h1v1h-1zM158 891h1v1h-1zM169 891h1v1h-1zM180 891h1v1h-1zM192 891h1v1h-1zM203 891h1v1h-1zM214 891h1v1h-1zM225 891h1v1h-1zM236 891h1v1h-1zM247 891h1v1h-1zM258 891h1v1h-1zM270 891h1v1h-1zM281 891h1v1h-1zM292 891h1v1h-1zM303 891h1v1h-1zM314 891h1v1h-1zM325 891h1v1h-1zM336 891h1v1h-1zM347 891h1v1h-1zM359 891h1v1h-1zM370 891h1v1h-1zM381 891h1v1h-1zM392 891h1v1h-1zM403 891h1v1h-1zM414 891h1v1h-1zM425 891h1v1h-1zM436 891h1v1h-1zM448 891h1v1h-1zM459 891h1v1h-1zM470 891h1v1h-1zM481 891h1v1h-1zM492 891h1v1h-1zM503 891h1v1h-1zM514 891h1v1h-1zM526 891h1v1h-1zM537 891h1v1h-1zM14 902h1v1h-1zM25 902h1v1h-1zM36 902h1v1h-1zM47 902h1v1h-1zM58 902h1v1h-1zM69 902h1v1h-1zM80 902h1v1h-1zM91 902h1v1h-1zM103 902h1v1h-1zM114 902h1v1h-1zM125 902h1v1h-1zM136 902h1v1h-1zM147 902h1v1h-1zM158 902h1v1h-1zM169 902h1v1h-1zM180 902h1v1h-1zM192 902h1v1h-1zM203 902h1v1h-1zM214 902h1v1h-1zM225 902h1v1h-1zM236 902h1v1h-1zM247 902h1v1h-1zM258 902h1v1h-1zM270 902h1v1h-1zM281 902h1v1h-1zM292 902h1v1h-1zM303 902h1v1h-1zM314 902h1v1h-1zM325 902h1v1h-1zM336 902h1v1h-1zM347 902h1v1h-1zM359 902h1v1h-1zM370 902h1v1h-1zM381 902h1v1h-1zM392 902h1v1h-1zM403 902h1v1h-1zM414 902h1v1h-1zM425 902h1v1h-1zM436 902h1v1h-1zM448 902h1v1h-1zM459 902h1v1h-1zM470 902h1v1h-1zM481 902h1v1h-1zM492 902h1v1h-1zM503 902h1v1h-1zM514 902h1v1h-1zM526 902h1v1h-1zM537 902h1v1h-1z" fill="#000"/>
<path d="M47 713.5H261M58.5 713V803M58.5 847V870M103.5 713V726M103.5 780V792M103.5 791V803M103.5 858V870M103 791.5H193M247 791.5H326M370 791.5H404M459 791.5H471M169.5 791V848M169 847.5H237M281 847.5H293M292.5 736V848M292.5 636V671M292.5 547V580.5M292 547.5H338M392.5 769V792" stroke="#0000ff" stroke-width="1" fill="none" shape-rendering="crispEdges"/>
<path d="M58.5 802V823M58.5 827V848M192 791.5H198M242 791.5H248M325 791.5H346M350 791.5H371M403 791.5H410M453 791.5H460M236 847.5H257M261 847.5H282M292.5 719V737M270 719.5H293M270 686.5H293M292.5 670V687M337 547.5H343M385 547.5H393" stroke="#0000a0" stroke-width="1" fill="none" shape-rendering="crispEdges"/>
<rect x="55" y="710" width="7" height="7" fill="#0000ff" />
<rect x="100" y="710" width="7" height="7" fill="#0000ff" />
<rect x="100" y="788" width="7" height="7" fill="#0000ff" />
<rect x="166" y="788" width="7" height="7" fill="#0000ff" />
<rect x="289" y="788" width="7" height="7" fill="#0000ff" />
<rect x="389" y="788" width="7" height="7" fill="#0000ff" />
<path d="M47 822.5H70M47 827.5H70M256.5 836V859M261.5 836V859M345.5 780V803M350.5 780V803M197.5 784.5H242.5V799.5H197.5ZM409.5 784.5H453.5V799.5H409.5ZM270.5 680V726M344.5 547.5H357M350.5 541V553M378.5 541V553" stroke="#0000a0" stroke-width="1" fill="none" shape-rendering="crispEdges"/>
<path d="M46.5 869.5H71.5L59 882.5ZM90.5 869.5H115.5L103 882.5ZM470.5 779.5V804L482.5 791.5ZM392.5 535V560L404.5 547.5Z" stroke="#0000ff" stroke-width="1" fill="none" shape-rendering="crispEdges"/>
<path d="M261 711h1v6h-1zM262 711h2v1h-2zM264 712h4v1h-4zM268 713h2v1h-2zM262 716h1v1h-1zM263 715h3v1h-3zM266 714h3v1h-3z" fill="#0000a0"/>
<circle cx="364" cy="546.6" r="21.6" stroke="#0000a0" stroke-width="1" fill="none" shape-rendering="crispEdges"/>
<path d="M103.5 725.5H107.0C112.0 725.5 114.5 731.5 114.5 736.0C114.5 739.5 113.0 742.5 110.5 744.5C114.5 747.5 115.0 750.5 115.0 753.0C115.0 755.5 114.0 758.5 111.5 761.2C114.5 763.5 115.0 766.5 115.0 769.5C115.0 774.5 109.5 780.5 104.0 780.5M110.5 744.5C106.5 741.0 98.5 740.5 95.0 745.0C98.5 748.5 106.5 748.5 110.5 744.5M111.5 761.2C106.5 758.0 98.5 757.5 95.0 761.5C98.5 765.0 106.5 765.0 111.5 761.2" stroke="#0000a0" stroke-width="1" fill="none" shape-rendering="crispEdges"/>
<path d="M103.5 802.7H107.0C112.0 802.7 114.5 808.7 114.5 813.2C114.5 816.7 113.0 819.7 110.5 821.7C114.5 824.7 115.0 827.7 115.0 830.2C115.0 832.7 114.0 835.7 111.5 838.4000000000001C114.5 840.7 115.0 843.7 115.0 846.7C115.0 851.7 109.5 857.7 104.0 857.7M110.5 821.7C106.5 818.2 98.5 817.7 95.0 822.2C98.5 825.7 106.5 825.7 110.5 821.7M111.5 838.4000000000001C106.5 835.2 98.5 834.7 95.0 838.7C98.5 842.2 106.5 842.2 111.5 838.4000000000001" stroke="#0000a0" stroke-width="1" fill="none" shape-rendering="crispEdges"/>
<path d="M292.5 580.5H289.0C284.0 580.5 281.5 586.5 281.5 591.0C281.5 594.5 283.0 597.5 285.5 599.5C281.5 602.5 281.0 605.5 281.0 608.0C281.0 610.5 282.0 613.5 284.5 616.2C281.5 618.5 281.0 621.5 281.0 624.5C281.0 629.5 286.5 635.5 292.0 635.5M285.5 599.5C289.5 596.0 297.5 595.5 301.0 600.0C297.5 603.5 289.5 603.5 285.5 599.5M284.5 616.2C289.5 613.0 297.5 612.5 301.0 616.5C297.5 620.0 289.5 620.0 284.5 616.2" stroke="#0000a0" stroke-width="1" fill="none" shape-rendering="crispEdges"/>
<path d="M96 730h2v1h-2zM95 731h1v1h-1zM98 731h1v1h-1zM94 732h1v2h-1zM99 732h1v2h-1zM95 734h1v1h-1zM98 734h1v1h-1zM96 735h2v1h-2zM96 808h2v1h-2zM95 809h1v1h-1zM98 809h1v1h-1zM94 810h1v2h-1zM99 810h1v2h-1zM95 812h1v1h-1zM98 812h1v1h-1zM96 813h2v1h-2zM296 586h3v1h-3zM295 587h1v3h-1zM299 587h1v3h-1zM296 590h3v1h-3z" fill="#0000a0"/>
<text x="354.5" y="520" font-size="16" font-weight="bold" fill="#000" text-anchor="start" letter-spacing="0.5">V2</text>
<text x="360" y="583.5" font-size="16" font-weight="bold" fill="#000" text-anchor="start" letter-spacing="0.5">9</text>
<text x="258.5" y="597" font-size="16" font-weight="bold" fill="#000" text-anchor="start" letter-spacing="0.5">L3</text>
<text x="241" y="625" font-size="16" font-weight="bold" fill="#000" text-anchor="start" letter-spacing="0.5">100µ</text>
<text x="257.5" y="666" font-size="16" font-weight="bold" fill="#000" text-anchor="start" letter-spacing="0.5">J1</text>
<text x="291.5" y="706" font-size="16" font-weight="bold" fill="#000" text-anchor="start" letter-spacing="0.5">BF245A</text>
<text x="46.8" y="658" font-size="16" font-weight="bold" fill="#0000ff" text-anchor="start" letter-spacing="0.2">492kHz</text>
<text x="47.5" y="685.5" font-size="16" font-weight="bold" fill="#000" text-anchor="start" letter-spacing="0.3">K L1 L2 1</text>
<text x="25" y="719" font-size="16" font-weight="bold" fill="#000" text-anchor="start" letter-spacing="0.5">HF</text>
<text x="115.5" y="742" font-size="16" font-weight="bold" fill="#000" text-anchor="start" letter-spacing="0.5">L1</text>
<text x="115.5" y="770" font-size="16" font-weight="bold" fill="#000" text-anchor="start" letter-spacing="0.5">187µ</text>
<text x="115.5" y="820" font-size="16" font-weight="bold" fill="#000" text-anchor="start" letter-spacing="0.5">L2</text>
<text x="115.5" y="847.5" font-size="16" font-weight="bold" fill="#000" text-anchor="start" letter-spacing="0.5">20µ</text>
<text x="30.5" y="814" font-size="16" font-weight="bold" fill="#000" text-anchor="start" letter-spacing="0.5">C1</text>
<text x="15" y="846.5" font-size="16" font-weight="bold" fill="#000" text-anchor="start" letter-spacing="0.5">356p</text>
<text x="208.5" y="779.5" font-size="16" font-weight="bold" fill="#000" text-anchor="start" letter-spacing="0.5">R1</text>
<text x="206" y="814" font-size="16" font-weight="bold" fill="#000" text-anchor="start" letter-spacing="0.5">10k</text>
<text x="247.5" y="832" font-size="16" font-weight="bold" fill="#000" text-anchor="start" letter-spacing="0.5">C2</text>
<text x="249" y="873" font-size="16" font-weight="bold" fill="#000" text-anchor="start" letter-spacing="0.5">1n</text>
<text x="337" y="776" font-size="16" font-weight="bold" fill="#000" text-anchor="start" letter-spacing="0.5">C4</text>
<text x="333" y="817" font-size="16" font-weight="bold" fill="#000" text-anchor="start" letter-spacing="0.5">10n</text>
<text x="420.5" y="780" font-size="16" font-weight="bold" fill="#000" text-anchor="start" letter-spacing="0.5">R3</text>
<text x="418" y="814" font-size="16" font-weight="bold" fill="#000" text-anchor="start" letter-spacing="0.5">10k</text>
<text x="0" y="0" font-size="16" font-weight="bold" fill="#000" letter-spacing="0.5" transform="translate(397.5,768.5) rotate(-90)">AC</text>
<text x="292" y="881" font-size="16" font-weight="bold" fill="#000" text-anchor="start" letter-spacing="0.42">.tran 0 1.05m 1m 1n startup</text>
<defs><linearGradient id="shd" x1="0" y1="0" x2="0" y2="1"><stop offset="0" stop-color="#7c7c7c"/><stop offset="1" stop-color="#a0a0a0"/></linearGradient><linearGradient id="ttl" x1="0" y1="0" x2="0" y2="1"><stop offset="0" stop-color="#ffffff"/><stop offset="1" stop-color="#f5f5f5"/></linearGradient></defs>
<filter id="blur" x="-20%" y="-20%" width="140%" height="140%"><feGaussianBlur stdDeviation="5"/></filter>
<rect x="546" y="456" width="367" height="452" fill="#a0a0a0" />
<rect x="550" y="462" width="380" height="378" fill="#000" opacity="0.22" filter="url(#blur)"/>
<rect x="546" y="456" width="1" height="452" fill="#7e7e7e" />
<rect x="547" y="456" width="4" height="452" fill="#8e8e8e" />
<rect x="551" y="458" width="1" height="376" fill="#747474" />
<path d="M552 833V462L556 458H913V833Z" fill="#ffffff"/>
<rect x="552" y="832" width="361" height="1" fill="#707070" />
<rect x="552" y="476" width="361" height="10" fill="url(#ttl)" />
<rect x="556" y="457" width="357" height="1" fill="#7c7c7c" />
<text x="693" y="476.6" font-size="13" font-weight="bold" fill="#3c3c3c" text-anchor="start" >Edit Simulation Command</text>
<path d="M563.5 517.5V730.5H913" stroke="#d0d0d0" fill="none" shape-rendering="crispEdges"/>
<path d="M563.5 518V497.5H621V518" stroke="#d0d0d0" fill="#fff" shape-rendering="crispEdges"/>
<text x="572" y="511" font-size="12" font-weight="normal" fill="#000" text-anchor="start" textLength="42.5" lengthAdjust="spacingAndGlyphs" >Transient</text>
<path d="M622 517.5V499.5H687V517.5" stroke="#d0d0d0" fill="#fff" shape-rendering="crispEdges"/>
<text x="627" y="512" font-size="12" font-weight="normal" fill="#000" text-anchor="start" textLength="55.2" lengthAdjust="spacingAndGlyphs" >AC Analysis</text>
<path d="M687 517.5V499.5H748.5V517.5" stroke="#d0d0d0" fill="#fff" shape-rendering="crispEdges"/>
<text x="694.4" y="512" font-size="12" font-weight="normal" fill="#000" text-anchor="start" textLength="48.6" lengthAdjust="spacingAndGlyphs" >DC sweep</text>
<path d="M748.5 517.5V499.5H790.5V517.5" stroke="#d0d0d0" fill="#fff" shape-rendering="crispEdges"/>
<text x="756.4" y="512" font-size="12" font-weight="normal" fill="#000" text-anchor="start" textLength="26.4" lengthAdjust="spacingAndGlyphs" >Noise</text>
<path d="M790.5 517.5V499.5H859.5V517.5" stroke="#d0d0d0" fill="#fff" shape-rendering="crispEdges"/>
<text x="797.4" y="512" font-size="12" font-weight="normal" fill="#000" text-anchor="start" textLength="56.5" lengthAdjust="spacingAndGlyphs" >DC Transfer</text>
<path d="M859.5 517.5V499.5H960V517.5" stroke="#d0d0d0" fill="#fff" shape-rendering="crispEdges"/>
<text x="866.6" y="512" font-size="12" font-weight="normal" fill="#000" text-anchor="start" textLength="50" lengthAdjust="spacingAndGlyphs" >DC op pnt</text>
<path d="M622 517.5H913" stroke="#d0d0d0" fill="none" shape-rendering="crispEdges"/>
<text x="669.5" y="536" font-size="12" font-weight="normal" fill="#000" text-anchor="start" textLength="207" lengthAdjust="spacingAndGlyphs" >Perform a non-linear, time-domain simulation.</text>
<text x="807.5" y="562.5" font-size="12" font-weight="normal" fill="#000" text-anchor="end" textLength="50" lengthAdjust="spacingAndGlyphs" >Stop Time:</text>
<text x="807.5" y="585.8" font-size="12" font-weight="normal" fill="#000" text-anchor="end" textLength="123" lengthAdjust="spacingAndGlyphs" >Time to Start Saving Data:</text>
<text x="807.5" y="607.5" font-size="12" font-weight="normal" fill="#000" text-anchor="end" textLength="92" lengthAdjust="spacingAndGlyphs" >Maximum Timestep:</text>
<rect x="813.5" y="548.5" width="65" height="19" fill="#fff" stroke="#d0d0d0" shape-rendering="crispEdges"/>
<text x="816.5" y="562" font-size="12" font-weight="normal" fill="#000" text-anchor="start" textLength="28.5" lengthAdjust="spacingAndGlyphs" >1.05m</text>
<rect x="813.5" y="571.5" width="65" height="19" fill="#fff" stroke="#d0d0d0" shape-rendering="crispEdges"/>
<text x="816.5" y="585" font-size="12" font-weight="normal" fill="#000" text-anchor="start" textLength="13.5" lengthAdjust="spacingAndGlyphs" >1m</text>
<rect x="813.5" y="593.5" width="65" height="19" fill="#fff" stroke="#d0d0d0" shape-rendering="crispEdges"/>
<text x="816.5" y="607" font-size="12" font-weight="normal" fill="#000" text-anchor="start" textLength="13.5" lengthAdjust="spacingAndGlyphs" >1n</text>
<text x="803.5" y="630.3" font-size="12" font-weight="normal" fill="#000" text-anchor="end" textLength="186" lengthAdjust="spacingAndGlyphs" >Start external DC supply voltages at 0V:</text>
<text></text>
<text x="806.5" y="653.5" font-size="12" font-weight="normal" fill="#000" text-anchor="end" textLength="196" lengthAdjust="spacingAndGlyphs" >Stop simulating if steady state is detected:</text>
<text x="806.5" y="697.5" font-size="12" font-weight="normal" fill="#000" text-anchor="end" textLength="136" lengthAdjust="spacingAndGlyphs" >Step the load current source:</text>
<text x="806.5" y="718.3" font-size="12" font-weight="normal" fill="#000" text-anchor="end" textLength="162" lengthAdjust="spacingAndGlyphs" >Skip Initial operating point solution:</text>
<rect x="811.5" y="619.5" width="12" height="12" rx="1.5" fill="#fff" stroke="#c8c8c8"/>
<rect x="811.5" y="642.5" width="12" height="12" rx="1.5" fill="#fff" stroke="#c8c8c8"/>
<rect x="811.5" y="687.5" width="12" height="12" rx="1.5" fill="#fff" stroke="#c8c8c8"/>
<rect x="811.5" y="707.5" width="12" height="12" rx="1.5" fill="#fff" stroke="#c8c8c8"/>
<path d="M814.5 625.5L817 628.5L821.5 622.5" stroke="#222" stroke-width="1.2" fill="none"/>
<text x="563.8" y="746.7" font-size="12" font-weight="normal" fill="#000" text-anchor="start" textLength="33.8" lengthAdjust="spacingAndGlyphs" >Syntax:</text>
<text x="604.3" y="746.7" font-size="12" font-weight="normal" fill="#000" text-anchor="start" textLength="330" lengthAdjust="spacingAndGlyphs" >.tran &lt;Tprint&gt; &lt;Tstop&gt; [&lt;Tstart&gt; [&lt;Tmaxstep&gt;]] [&lt;option&gt; [&lt;option&gt;]...]</text>
<path d="M563.5 795V759.5H913M563.5 794.5H913" stroke="#d0d0d0" fill="none" shape-rendering="crispEdges"/>
<text x="566.5" y="773" font-size="12" font-weight="normal" fill="#000" text-anchor="start" textLength="129" lengthAdjust="spacingAndGlyphs" >.tran 0 1.05m 1m 1n startup</text>
<rect x="605.5" y="798.5" width="77" height="22" rx="2" fill="#fff" stroke="#cccccc"/>
<text x="627.8" y="813.7" font-size="12" font-weight="normal" fill="#000" text-anchor="start" textLength="32.7" lengthAdjust="spacingAndGlyphs" >Cancel</text>
<rect x="743.5" y="798.5" width="77" height="22" rx="2" fill="#fff" stroke="#6cc0f4"/>
<rect x="746.5" y="801.5" width="72" height="16" fill="none" stroke="#000" stroke-dasharray="1 1" shape-rendering="crispEdges"/>
<text x="774.3" y="813.7" font-size="12" font-weight="normal" fill="#000" text-anchor="start" textLength="15.5" lengthAdjust="spacingAndGlyphs" >OK</text>
<ellipse cx="823.4" cy="628" rx="34.3" ry="17.6" stroke="#ff0000" stroke-width="5.6" fill="none"/>
</svg></body></html>
